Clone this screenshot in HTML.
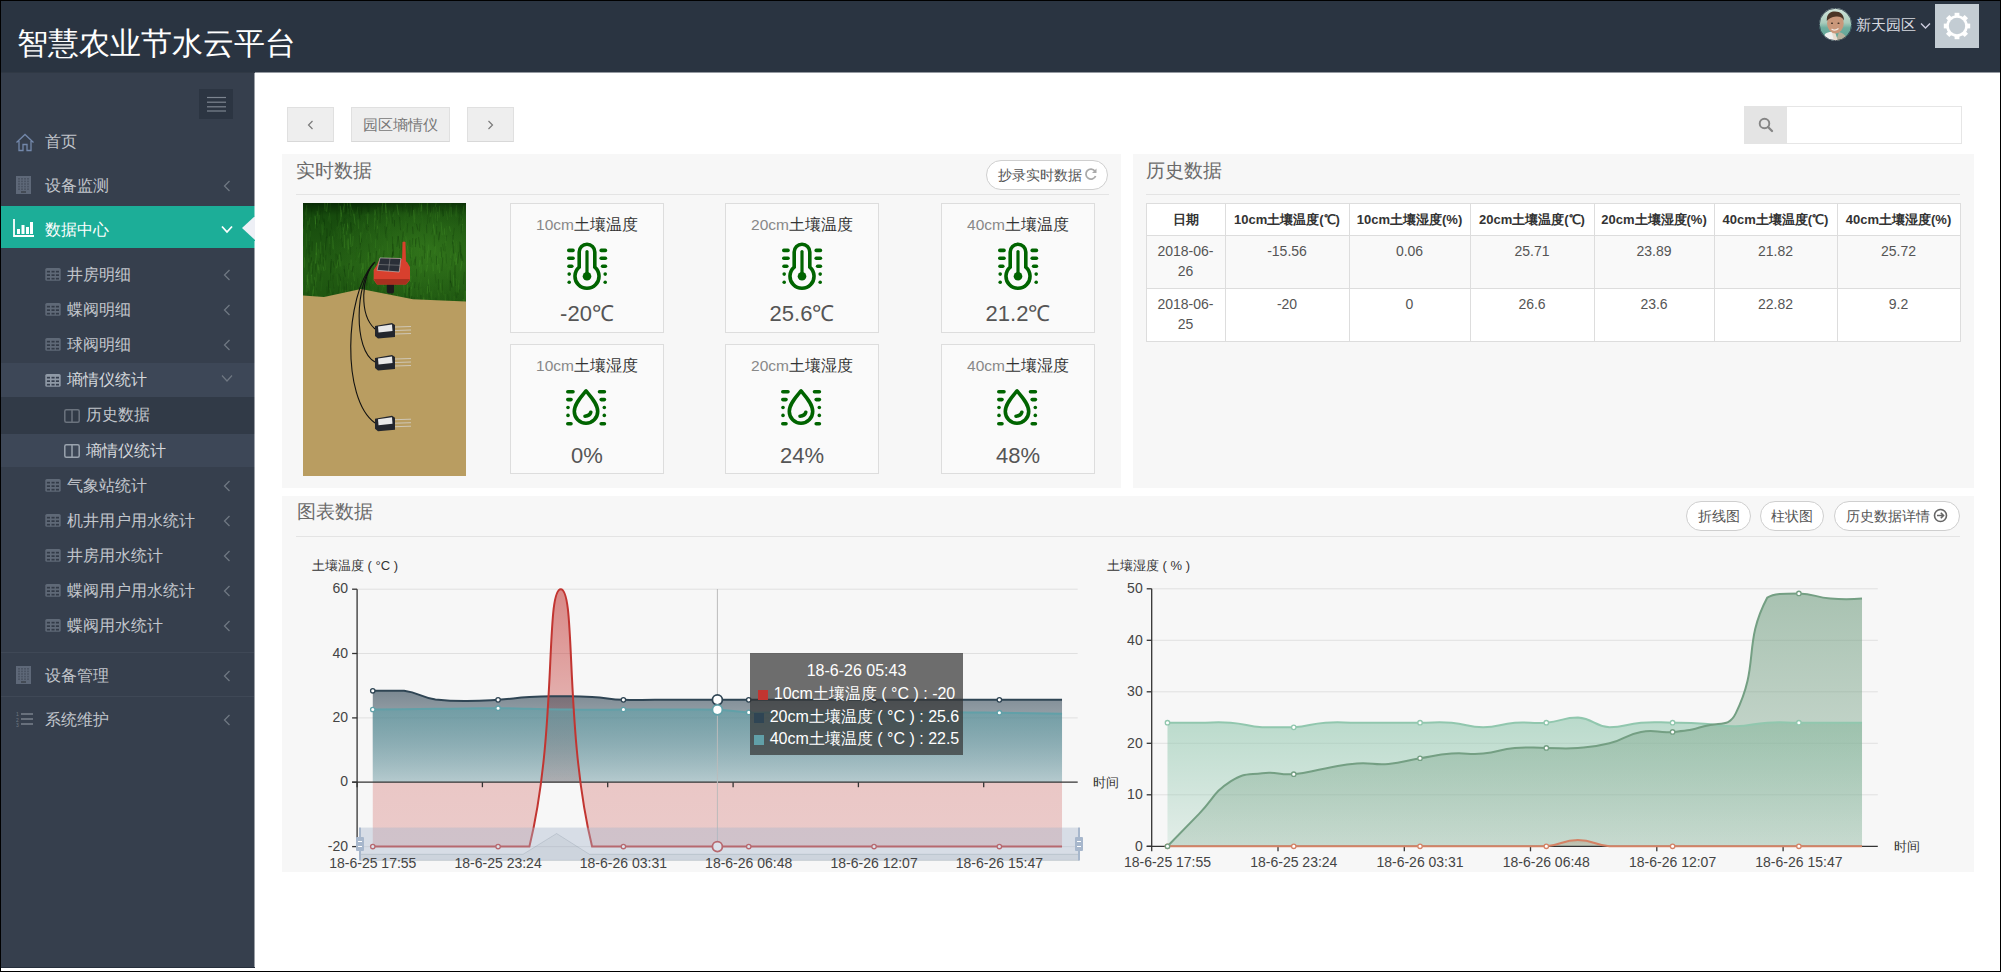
<!DOCTYPE html>
<html><head><meta charset="utf-8"><style>
*{box-sizing:border-box;margin:0;padding:0}
html,body{width:2001px;height:972px;overflow:hidden;background:#fff;font-family:"Liberation Sans",sans-serif}
.abs{position:absolute}
.bk{position:absolute;background:#000}
#hdr{position:absolute;left:0;top:0;width:2001px;height:72px;background:#2a3441}
#title{position:absolute;left:17px;top:24px;font-size:31px;color:#fff;white-space:nowrap;line-height:40px}
#side{position:absolute;left:0;top:72px;width:255px;height:895px;background:#363f4d}
.panel{position:absolute;background:#f7f7f7}
.ptitle{position:absolute;font-size:19px;line-height:24px;color:#6b6b6b;white-space:nowrap}
.divl{position:absolute;height:1px;background:#e4e4e4}
.btn{position:absolute;background:#eee;border:1px solid #e0e0e0;border-bottom-color:#d8d8d8;color:#777;font-size:15px;text-align:center}
.card{position:absolute;width:154px;height:130px;background:#fafafa;border:1px solid #ddd;text-align:center}
.card .lab{position:absolute;left:0;right:0;top:9px;font-size:15px;line-height:20px;color:#333;white-space:nowrap}
.card .lab span{color:#777}
.card .val{position:absolute;left:0;right:0;top:95px;font-size:22px;line-height:26px;color:#444;white-space:nowrap}
.card svg{position:absolute}
.pill{position:absolute;border:1px solid #cfcfcf;border-radius:15px;background:#fff;color:#555;font-size:14px;text-align:center;white-space:nowrap}
.cell{position:absolute;font-size:14px;color:#555;text-align:center;white-space:nowrap;line-height:20px}
</style></head><body>
<div id="hdr"><div id="title">智慧农业节水云平台</div></div><div id="side"><div class="abs" style="left:199px;top:17px;width:34px;height:30px;background:#2c3542"></div><svg class="abs" style="left:207px;top:24px" width="19" height="16"><g stroke="#7d8590" stroke-width="1.2"><line x1="0" y1="1.5" x2="19" y2="1.5"/><line x1="0" y1="6.2" x2="19" y2="6.2"/><line x1="0" y1="10.8" x2="19" y2="10.8"/><line x1="0" y1="15" x2="19" y2="15"/></g></svg><svg class="abs" style="left:15px;top:61px" width="20" height="19"><path d="M1.5 9.5 L10 1.5 L18.5 9.5 M4 8 V17.5 H8 V11.5 H12 V17.5 H16 V8" fill="none" stroke="#7388ab" stroke-width="1.3"/></svg><div class="abs" style="left:45px;top:60px;font-size:15.5px;line-height:20px;color:#c2c6cc;white-space:nowrap">首页</div><svg class="abs" style="left:16px;top:104px" width="15" height="18"><rect x="0" y="0" width="15" height="18" fill="#5e6878"/><rect x="2" y="2.0" width="2" height="1.6" fill="#4c5564"/><rect x="5" y="2.0" width="2" height="1.6" fill="#4c5564"/><rect x="8" y="2.0" width="2" height="1.6" fill="#4c5564"/><rect x="11" y="2.0" width="2" height="1.6" fill="#4c5564"/><rect x="2" y="4.6" width="2" height="1.6" fill="#4c5564"/><rect x="5" y="4.6" width="2" height="1.6" fill="#4c5564"/><rect x="8" y="4.6" width="2" height="1.6" fill="#4c5564"/><rect x="11" y="4.6" width="2" height="1.6" fill="#4c5564"/><rect x="2" y="7.2" width="2" height="1.6" fill="#4c5564"/><rect x="5" y="7.2" width="2" height="1.6" fill="#4c5564"/><rect x="8" y="7.2" width="2" height="1.6" fill="#4c5564"/><rect x="11" y="7.2" width="2" height="1.6" fill="#4c5564"/><rect x="2" y="9.8" width="2" height="1.6" fill="#4c5564"/><rect x="5" y="9.8" width="2" height="1.6" fill="#4c5564"/><rect x="8" y="9.8" width="2" height="1.6" fill="#4c5564"/><rect x="11" y="9.8" width="2" height="1.6" fill="#4c5564"/><rect x="2" y="12.4" width="2" height="1.6" fill="#4c5564"/><rect x="5" y="12.4" width="2" height="1.6" fill="#4c5564"/><rect x="8" y="12.4" width="2" height="1.6" fill="#4c5564"/><rect x="11" y="12.4" width="2" height="1.6" fill="#4c5564"/><rect x="5" y="15" width="5" height="2" fill="#444b55"/></svg><div class="abs" style="left:45px;top:104px;font-size:15.5px;line-height:20px;color:#c2c6cc;white-space:nowrap">设备监测</div><svg class="abs" style="left:223px;top:108px" width="8" height="12"><path d="M6.5 1 L1.5 6 L6.5 11" fill="none" stroke="#6f7782" stroke-width="1.3"/></svg><div class="abs" style="left:0;top:134px;width:255px;height:42px;background:#1cae98"></div><svg class="abs" style="left:242px;top:144px" width="13" height="24"><path d="M13 0 L0 12 L13 24 Z" fill="#eef0f6"/></svg><svg class="abs" style="left:13px;top:147px" width="22" height="18"><path d="M1 0 V17 H21" fill="none" stroke="#fff" stroke-width="1.8"/><rect x="4" y="10" width="3" height="5" fill="#fff"/><rect x="8.5" y="6" width="3" height="9" fill="#fff"/><rect x="13" y="8" width="3" height="7" fill="#fff"/><rect x="17" y="3" width="3" height="12" fill="#fff"/></svg><div class="abs" style="left:45px;top:148px;font-size:15.5px;line-height:20px;color:#ffffff;white-space:nowrap">数据中心</div><svg class="abs" style="left:221px;top:153px" width="12" height="9"><path d="M1 1.5 L6.0 7 L11 1.5" fill="none" stroke="#ffffff" stroke-width="1.8"/></svg><svg class="abs" style="left:45px;top:196px" width="16" height="13"><rect x="0.3" y="0" width="15.4" height="12.8" rx="1.6" fill="#5f6977"/><rect x="1.9" y="2.8" width="3.1" height="1.7" fill="#323a47"/><rect x="1.9" y="6.3" width="3.1" height="1.7" fill="#323a47"/><rect x="1.9" y="9.8" width="3.1" height="1.7" fill="#323a47"/><rect x="6.5" y="2.8" width="3.1" height="1.7" fill="#323a47"/><rect x="6.5" y="6.3" width="3.1" height="1.7" fill="#323a47"/><rect x="6.5" y="9.8" width="3.1" height="1.7" fill="#323a47"/><rect x="10.9" y="2.8" width="3.1" height="1.7" fill="#323a47"/><rect x="10.9" y="6.3" width="3.1" height="1.7" fill="#323a47"/><rect x="10.9" y="9.8" width="3.1" height="1.7" fill="#323a47"/></svg><div class="abs" style="left:67px;top:193px;font-size:15.5px;line-height:20px;color:#c2c6cc;white-space:nowrap">井房明细</div><svg class="abs" style="left:223px;top:197px" width="8" height="12"><path d="M6.5 1 L1.5 6 L6.5 11" fill="none" stroke="#6f7782" stroke-width="1.3"/></svg><svg class="abs" style="left:45px;top:231px" width="16" height="13"><rect x="0.3" y="0" width="15.4" height="12.8" rx="1.6" fill="#5f6977"/><rect x="1.9" y="2.8" width="3.1" height="1.7" fill="#323a47"/><rect x="1.9" y="6.3" width="3.1" height="1.7" fill="#323a47"/><rect x="1.9" y="9.8" width="3.1" height="1.7" fill="#323a47"/><rect x="6.5" y="2.8" width="3.1" height="1.7" fill="#323a47"/><rect x="6.5" y="6.3" width="3.1" height="1.7" fill="#323a47"/><rect x="6.5" y="9.8" width="3.1" height="1.7" fill="#323a47"/><rect x="10.9" y="2.8" width="3.1" height="1.7" fill="#323a47"/><rect x="10.9" y="6.3" width="3.1" height="1.7" fill="#323a47"/><rect x="10.9" y="9.8" width="3.1" height="1.7" fill="#323a47"/></svg><div class="abs" style="left:67px;top:228px;font-size:15.5px;line-height:20px;color:#c2c6cc;white-space:nowrap">蝶阀明细</div><svg class="abs" style="left:223px;top:232px" width="8" height="12"><path d="M6.5 1 L1.5 6 L6.5 11" fill="none" stroke="#6f7782" stroke-width="1.3"/></svg><svg class="abs" style="left:45px;top:266px" width="16" height="13"><rect x="0.3" y="0" width="15.4" height="12.8" rx="1.6" fill="#5f6977"/><rect x="1.9" y="2.8" width="3.1" height="1.7" fill="#323a47"/><rect x="1.9" y="6.3" width="3.1" height="1.7" fill="#323a47"/><rect x="1.9" y="9.8" width="3.1" height="1.7" fill="#323a47"/><rect x="6.5" y="2.8" width="3.1" height="1.7" fill="#323a47"/><rect x="6.5" y="6.3" width="3.1" height="1.7" fill="#323a47"/><rect x="6.5" y="9.8" width="3.1" height="1.7" fill="#323a47"/><rect x="10.9" y="2.8" width="3.1" height="1.7" fill="#323a47"/><rect x="10.9" y="6.3" width="3.1" height="1.7" fill="#323a47"/><rect x="10.9" y="9.8" width="3.1" height="1.7" fill="#323a47"/></svg><div class="abs" style="left:67px;top:263px;font-size:15.5px;line-height:20px;color:#c2c6cc;white-space:nowrap">球阀明细</div><svg class="abs" style="left:223px;top:267px" width="8" height="12"><path d="M6.5 1 L1.5 6 L6.5 11" fill="none" stroke="#6f7782" stroke-width="1.3"/></svg><div class="abs" style="left:0;top:291px;width:255px;height:34px;background:#3d4757"></div><svg class="abs" style="left:45px;top:302px" width="16" height="13"><rect x="0.3" y="0" width="15.4" height="12.8" rx="1.6" fill="#8f99a6"/><rect x="1.9" y="2.8" width="3.1" height="1.7" fill="#343d4c"/><rect x="1.9" y="6.3" width="3.1" height="1.7" fill="#343d4c"/><rect x="1.9" y="9.8" width="3.1" height="1.7" fill="#343d4c"/><rect x="6.5" y="2.8" width="3.1" height="1.7" fill="#343d4c"/><rect x="6.5" y="6.3" width="3.1" height="1.7" fill="#343d4c"/><rect x="6.5" y="9.8" width="3.1" height="1.7" fill="#343d4c"/><rect x="10.9" y="2.8" width="3.1" height="1.7" fill="#343d4c"/><rect x="10.9" y="6.3" width="3.1" height="1.7" fill="#343d4c"/><rect x="10.9" y="9.8" width="3.1" height="1.7" fill="#343d4c"/></svg><div class="abs" style="left:67px;top:298px;font-size:15.5px;line-height:20px;color:#d5d8dc;white-space:nowrap">墒情仪统计</div><svg class="abs" style="left:221px;top:302px" width="12" height="9"><path d="M1 1.5 L6.0 7 L11 1.5" fill="none" stroke="#6f7782" stroke-width="1.2"/></svg><div class="abs" style="left:0;top:325px;width:255px;height:37px;background:#313a47"></div><svg class="abs" style="left:64px;top:337px" width="16" height="14"><rect x="0.8" y="0.8" width="14.4" height="12.4" rx="1.5" fill="none" stroke="#6b737e" stroke-width="1.5"/><line x1="8" y1="1" x2="8" y2="13" stroke="#6b737e" stroke-width="1.5"/></svg><div class="abs" style="left:86px;top:333px;font-size:15.5px;line-height:20px;color:#c2c6cc;white-space:nowrap">历史数据</div><div class="abs" style="left:0;top:362px;width:255px;height:33px;background:#3d4757"></div><svg class="abs" style="left:64px;top:372px" width="16" height="14"><rect x="0.8" y="0.8" width="14.4" height="12.4" rx="1.5" fill="none" stroke="#9aa3ae" stroke-width="1.5"/><line x1="8" y1="1" x2="8" y2="13" stroke="#9aa3ae" stroke-width="1.5"/></svg><div class="abs" style="left:86px;top:369px;font-size:15.5px;line-height:20px;color:#d5d8dc;white-space:nowrap">墒情仪统计</div><svg class="abs" style="left:45px;top:407px" width="16" height="13"><rect x="0.3" y="0" width="15.4" height="12.8" rx="1.6" fill="#5f6977"/><rect x="1.9" y="2.8" width="3.1" height="1.7" fill="#323a47"/><rect x="1.9" y="6.3" width="3.1" height="1.7" fill="#323a47"/><rect x="1.9" y="9.8" width="3.1" height="1.7" fill="#323a47"/><rect x="6.5" y="2.8" width="3.1" height="1.7" fill="#323a47"/><rect x="6.5" y="6.3" width="3.1" height="1.7" fill="#323a47"/><rect x="6.5" y="9.8" width="3.1" height="1.7" fill="#323a47"/><rect x="10.9" y="2.8" width="3.1" height="1.7" fill="#323a47"/><rect x="10.9" y="6.3" width="3.1" height="1.7" fill="#323a47"/><rect x="10.9" y="9.8" width="3.1" height="1.7" fill="#323a47"/></svg><div class="abs" style="left:67px;top:404px;font-size:15.5px;line-height:20px;color:#c2c6cc;white-space:nowrap">气象站统计</div><svg class="abs" style="left:223px;top:408px" width="8" height="12"><path d="M6.5 1 L1.5 6 L6.5 11" fill="none" stroke="#6f7782" stroke-width="1.3"/></svg><svg class="abs" style="left:45px;top:442px" width="16" height="13"><rect x="0.3" y="0" width="15.4" height="12.8" rx="1.6" fill="#5f6977"/><rect x="1.9" y="2.8" width="3.1" height="1.7" fill="#323a47"/><rect x="1.9" y="6.3" width="3.1" height="1.7" fill="#323a47"/><rect x="1.9" y="9.8" width="3.1" height="1.7" fill="#323a47"/><rect x="6.5" y="2.8" width="3.1" height="1.7" fill="#323a47"/><rect x="6.5" y="6.3" width="3.1" height="1.7" fill="#323a47"/><rect x="6.5" y="9.8" width="3.1" height="1.7" fill="#323a47"/><rect x="10.9" y="2.8" width="3.1" height="1.7" fill="#323a47"/><rect x="10.9" y="6.3" width="3.1" height="1.7" fill="#323a47"/><rect x="10.9" y="9.8" width="3.1" height="1.7" fill="#323a47"/></svg><div class="abs" style="left:67px;top:439px;font-size:15.5px;line-height:20px;color:#c2c6cc;white-space:nowrap">机井用户用水统计</div><svg class="abs" style="left:223px;top:443px" width="8" height="12"><path d="M6.5 1 L1.5 6 L6.5 11" fill="none" stroke="#6f7782" stroke-width="1.3"/></svg><svg class="abs" style="left:45px;top:477px" width="16" height="13"><rect x="0.3" y="0" width="15.4" height="12.8" rx="1.6" fill="#5f6977"/><rect x="1.9" y="2.8" width="3.1" height="1.7" fill="#323a47"/><rect x="1.9" y="6.3" width="3.1" height="1.7" fill="#323a47"/><rect x="1.9" y="9.8" width="3.1" height="1.7" fill="#323a47"/><rect x="6.5" y="2.8" width="3.1" height="1.7" fill="#323a47"/><rect x="6.5" y="6.3" width="3.1" height="1.7" fill="#323a47"/><rect x="6.5" y="9.8" width="3.1" height="1.7" fill="#323a47"/><rect x="10.9" y="2.8" width="3.1" height="1.7" fill="#323a47"/><rect x="10.9" y="6.3" width="3.1" height="1.7" fill="#323a47"/><rect x="10.9" y="9.8" width="3.1" height="1.7" fill="#323a47"/></svg><div class="abs" style="left:67px;top:474px;font-size:15.5px;line-height:20px;color:#c2c6cc;white-space:nowrap">井房用水统计</div><svg class="abs" style="left:223px;top:478px" width="8" height="12"><path d="M6.5 1 L1.5 6 L6.5 11" fill="none" stroke="#6f7782" stroke-width="1.3"/></svg><svg class="abs" style="left:45px;top:512px" width="16" height="13"><rect x="0.3" y="0" width="15.4" height="12.8" rx="1.6" fill="#5f6977"/><rect x="1.9" y="2.8" width="3.1" height="1.7" fill="#323a47"/><rect x="1.9" y="6.3" width="3.1" height="1.7" fill="#323a47"/><rect x="1.9" y="9.8" width="3.1" height="1.7" fill="#323a47"/><rect x="6.5" y="2.8" width="3.1" height="1.7" fill="#323a47"/><rect x="6.5" y="6.3" width="3.1" height="1.7" fill="#323a47"/><rect x="6.5" y="9.8" width="3.1" height="1.7" fill="#323a47"/><rect x="10.9" y="2.8" width="3.1" height="1.7" fill="#323a47"/><rect x="10.9" y="6.3" width="3.1" height="1.7" fill="#323a47"/><rect x="10.9" y="9.8" width="3.1" height="1.7" fill="#323a47"/></svg><div class="abs" style="left:67px;top:509px;font-size:15.5px;line-height:20px;color:#c2c6cc;white-space:nowrap">蝶阀用户用水统计</div><svg class="abs" style="left:223px;top:513px" width="8" height="12"><path d="M6.5 1 L1.5 6 L6.5 11" fill="none" stroke="#6f7782" stroke-width="1.3"/></svg><svg class="abs" style="left:45px;top:547px" width="16" height="13"><rect x="0.3" y="0" width="15.4" height="12.8" rx="1.6" fill="#5f6977"/><rect x="1.9" y="2.8" width="3.1" height="1.7" fill="#323a47"/><rect x="1.9" y="6.3" width="3.1" height="1.7" fill="#323a47"/><rect x="1.9" y="9.8" width="3.1" height="1.7" fill="#323a47"/><rect x="6.5" y="2.8" width="3.1" height="1.7" fill="#323a47"/><rect x="6.5" y="6.3" width="3.1" height="1.7" fill="#323a47"/><rect x="6.5" y="9.8" width="3.1" height="1.7" fill="#323a47"/><rect x="10.9" y="2.8" width="3.1" height="1.7" fill="#323a47"/><rect x="10.9" y="6.3" width="3.1" height="1.7" fill="#323a47"/><rect x="10.9" y="9.8" width="3.1" height="1.7" fill="#323a47"/></svg><div class="abs" style="left:67px;top:544px;font-size:15.5px;line-height:20px;color:#c2c6cc;white-space:nowrap">蝶阀用水统计</div><svg class="abs" style="left:223px;top:548px" width="8" height="12"><path d="M6.5 1 L1.5 6 L6.5 11" fill="none" stroke="#6f7782" stroke-width="1.3"/></svg><div class="abs" style="left:0;top:580px;width:255px;height:1px;background:#3f4856"></div><svg class="abs" style="left:16px;top:594px" width="15" height="18"><rect x="0" y="0" width="15" height="18" fill="#5e6878"/><rect x="2" y="2.0" width="2" height="1.6" fill="#4c5564"/><rect x="5" y="2.0" width="2" height="1.6" fill="#4c5564"/><rect x="8" y="2.0" width="2" height="1.6" fill="#4c5564"/><rect x="11" y="2.0" width="2" height="1.6" fill="#4c5564"/><rect x="2" y="4.6" width="2" height="1.6" fill="#4c5564"/><rect x="5" y="4.6" width="2" height="1.6" fill="#4c5564"/><rect x="8" y="4.6" width="2" height="1.6" fill="#4c5564"/><rect x="11" y="4.6" width="2" height="1.6" fill="#4c5564"/><rect x="2" y="7.2" width="2" height="1.6" fill="#4c5564"/><rect x="5" y="7.2" width="2" height="1.6" fill="#4c5564"/><rect x="8" y="7.2" width="2" height="1.6" fill="#4c5564"/><rect x="11" y="7.2" width="2" height="1.6" fill="#4c5564"/><rect x="2" y="9.8" width="2" height="1.6" fill="#4c5564"/><rect x="5" y="9.8" width="2" height="1.6" fill="#4c5564"/><rect x="8" y="9.8" width="2" height="1.6" fill="#4c5564"/><rect x="11" y="9.8" width="2" height="1.6" fill="#4c5564"/><rect x="2" y="12.4" width="2" height="1.6" fill="#4c5564"/><rect x="5" y="12.4" width="2" height="1.6" fill="#4c5564"/><rect x="8" y="12.4" width="2" height="1.6" fill="#4c5564"/><rect x="11" y="12.4" width="2" height="1.6" fill="#4c5564"/><rect x="5" y="15" width="5" height="2" fill="#444b55"/></svg><div class="abs" style="left:45px;top:594px;font-size:15.5px;line-height:20px;color:#c2c6cc;white-space:nowrap">设备管理</div><svg class="abs" style="left:223px;top:598px" width="8" height="12"><path d="M6.5 1 L1.5 6 L6.5 11" fill="none" stroke="#6f7782" stroke-width="1.3"/></svg><div class="abs" style="left:0;top:624px;width:255px;height:1px;background:#3f4856"></div><svg class="abs" style="left:16px;top:639px" width="17" height="16"><g fill="#6f7782" font-size="5" font-family="Liberation Sans"><text x="0" y="5">1</text><text x="0" y="10.5">2</text><text x="0" y="16">3</text></g><g stroke="#6f7782" stroke-width="1.8"><line x1="5" y1="3" x2="17" y2="3"/><line x1="5" y1="8" x2="17" y2="8"/><line x1="5" y1="13" x2="17" y2="13"/></g></svg><div class="abs" style="left:45px;top:638px;font-size:15.5px;line-height:20px;color:#c2c6cc;white-space:nowrap">系统维护</div><svg class="abs" style="left:223px;top:642px" width="8" height="12"><path d="M6.5 1 L1.5 6 L6.5 11" fill="none" stroke="#6f7782" stroke-width="1.3"/></svg></div><svg class="abs" style="left:1819px;top:8px" width="33" height="33" viewBox="0 0 33 33"><defs><clipPath id="av"><circle cx="16.5" cy="16.5" r="16.4"/></clipPath>
<linearGradient id="avbg" x1="0" y1="0" x2="0" y2="1"><stop offset="0" stop-color="#d4e6dc"/><stop offset="0.45" stop-color="#a9cbbb"/><stop offset="0.6" stop-color="#6fae9f"/><stop offset="1" stop-color="#5fa293"/></linearGradient></defs>
<g clip-path="url(#av)"><rect width="33" height="33" fill="url(#avbg)"/>
<path d="M4 33 L6 26 C9 24 12 23.5 15 24.5 L19 33 Z" fill="#f0f0ee"/>
<path d="M17 33 L20 24 C24 25 27 27 29 33 Z" fill="#b5b09a"/>
<path d="M13 25 L16 24 L19 33 L15 33 Z" fill="#e8ddd0"/>
<ellipse cx="16.4" cy="15.5" rx="8.3" ry="10" fill="#c9977a"/>
<path d="M7.8 13 C7.5 6 11 3.5 16 3.6 C21.5 3.7 25 6.5 25 12.5 C23.5 9.5 21 8.3 17 8.6 C12.5 9 10 10.5 7.8 13 Z" fill="#4b3526"/>
<path d="M12.5 21 Q16 23.5 19.5 20.5" stroke="#f2e8e0" stroke-width="1.1" fill="none"/>
<ellipse cx="13" cy="15.2" rx="1.1" ry="0.7" fill="#3a2a20"/><ellipse cx="19.5" cy="15.2" rx="1.1" ry="0.7" fill="#3a2a20"/>
</g><circle cx="16.5" cy="16.5" r="16.2" fill="none" stroke="#233040" stroke-width="0.8"/></svg><div class="abs" style="left:1856px;top:15px;font-size:15px;line-height:20px;color:#d8dbe0;white-space:nowrap">新天园区</div><svg class="abs" style="left:1920px;top:22px" width="11" height="8"><path d="M1 1.5 L5.5 6 L10 1.5" fill="none" stroke="#ccd" stroke-width="1.4"/></svg><div class="abs" style="left:1935px;top:4px;width:44px;height:44px;background:#c3ccd3"></div><svg class="abs" style="left:1942px;top:11px" width="30" height="30" viewBox="-15 -15 30 30"><rect x="-2.4" y="-13.2" width="4.8" height="4" transform="rotate(0)" fill="#fff"/><rect x="-2.4" y="-13.2" width="4.8" height="4" transform="rotate(45)" fill="#fff"/><rect x="-2.4" y="-13.2" width="4.8" height="4" transform="rotate(90)" fill="#fff"/><rect x="-2.4" y="-13.2" width="4.8" height="4" transform="rotate(135)" fill="#fff"/><rect x="-2.4" y="-13.2" width="4.8" height="4" transform="rotate(180)" fill="#fff"/><rect x="-2.4" y="-13.2" width="4.8" height="4" transform="rotate(225)" fill="#fff"/><rect x="-2.4" y="-13.2" width="4.8" height="4" transform="rotate(270)" fill="#fff"/><rect x="-2.4" y="-13.2" width="4.8" height="4" transform="rotate(315)" fill="#fff"/><circle r="10.8" fill="#fff"/><circle r="8.2" fill="#c3ccd3"/></svg><div class="btn" style="left:287px;top:107px;width:47px;height:35px"></div><svg class="abs" style="left:307px;top:120px" width="7" height="10"><path d="M5.5 1 L1.5 5 L5.5 9" fill="none" stroke="#7a7a7a" stroke-width="1.2"/></svg><div class="btn" style="left:351px;top:107px;width:99px;height:35px;line-height:33px;color:#777">园区墒情仪</div><div class="btn" style="left:467px;top:107px;width:47px;height:35px"></div><svg class="abs" style="left:487px;top:120px" width="7" height="10"><path d="M1.5 1 L5.5 5 L1.5 9" fill="none" stroke="#7a7a7a" stroke-width="1.2"/></svg><div class="abs" style="left:1744px;top:106px;width:218px;height:38px;border:1px solid #e6e6e6;background:#fff"></div><div class="abs" style="left:1744px;top:106px;width:43px;height:38px;background:#e4e4e4"></div><svg class="abs" style="left:1758px;top:117px" width="16" height="16"><circle cx="6.5" cy="6.5" r="4.8" fill="none" stroke="#858585" stroke-width="1.9"/><line x1="10" y1="10" x2="14" y2="14" stroke="#858585" stroke-width="2.3" stroke-linecap="round"/></svg><div class="panel" style="left:282px;top:154px;width:839px;height:334px"></div><div class="ptitle" style="left:296px;top:159px">实时数据</div><div class="divl" style="left:296px;top:194px;width:813px"></div><div class="pill" style="left:986px;top:160px;width:122px;height:30px;line-height:28px;padding-right:14px">抄录实时数据</div><svg class="abs" style="left:1084px;top:167px" width="14" height="14"><path d="M11 4.2 A5 5 0 1 0 11.6 9" fill="none" stroke="#aaa" stroke-width="1.8"/><path d="M12.5 1.5 L12.5 6 L8 6 Z" fill="#aaa"/></svg><svg class="abs" style="left:303px;top:203px" width="163" height="273" viewBox="0 0 163 273"><defs><linearGradient id="gr" x1="0" y1="0" x2="0" y2="1"><stop offset="0" stop-color="#082a05"/><stop offset="0.12" stop-color="#164a0d"/><stop offset="0.6" stop-color="#225c13"/><stop offset="1" stop-color="#1d5410"/></linearGradient><radialGradient id="gl" cx="0.75" cy="0.45" r="0.6"><stop offset="0" stop-color="#3f8a22" stop-opacity="0.55"/><stop offset="1" stop-color="#3f8a22" stop-opacity="0"/></radialGradient></defs><rect x="0" y="0" width="163" height="102" fill="url(#gr)"/><rect x="0" y="0" width="163" height="102" fill="url(#gl)"/><g fill="none" stroke-width="0.7"><path d="M52.1 21.7 L50.9 10.8" stroke="#4a9a2a" stroke-opacity="0.50"/><path d="M95.3 97.5 L94.0 90.5" stroke="#4a9a2a" stroke-opacity="0.38"/><path d="M13.1 52.0 L13.5 39.6" stroke="#4a9a2a" stroke-opacity="0.53"/><path d="M95.4 11.8 L94.0 1.5" stroke="#4a9a2a" stroke-opacity="0.54"/><path d="M141.4 31.7 L141.5 25.4" stroke="#4a9a2a" stroke-opacity="0.42"/><path d="M111.9 16.0 L112.0 5.8" stroke="#377a1e" stroke-opacity="0.36"/><path d="M8.5 8.1 L7.9 1.3" stroke="#0a2e06" stroke-opacity="0.38"/><path d="M95.8 50.3 L95.0 42.6" stroke="#377a1e" stroke-opacity="0.46"/><path d="M93.9 63.0 L95.4 50.1" stroke="#2b6a18" stroke-opacity="0.34"/><path d="M17.7 50.7 L17.5 38.9" stroke="#377a1e" stroke-opacity="0.53"/><path d="M158.7 13.2 L158.2 3.2" stroke="#0e3a08" stroke-opacity="0.35"/><path d="M80.9 84.3 L80.9 78.7" stroke="#4a9a2a" stroke-opacity="0.53"/><path d="M108.9 12.7 L109.9 1.4" stroke="#0a2e06" stroke-opacity="0.55"/><path d="M45.5 46.5 L45.1 35.5" stroke="#4a9a2a" stroke-opacity="0.53"/><path d="M100.0 53.8 L99.3 46.8" stroke="#0e3a08" stroke-opacity="0.29"/><path d="M63.3 92.2 L62.6 86.5" stroke="#2b6a18" stroke-opacity="0.37"/><path d="M20.9 50.2 L21.4 40.2" stroke="#2b6a18" stroke-opacity="0.55"/><path d="M61.5 25.0 L60.7 19.2" stroke="#377a1e" stroke-opacity="0.32"/><path d="M79.0 64.2 L79.1 56.9" stroke="#4a9a2a" stroke-opacity="0.29"/><path d="M99.8 34.6 L100.3 28.5" stroke="#0a2e06" stroke-opacity="0.54"/><path d="M121.5 55.8 L121.2 42.9" stroke="#0a2e06" stroke-opacity="0.37"/><path d="M15.3 67.2 L15.1 61.6" stroke="#4a9a2a" stroke-opacity="0.55"/><path d="M16.4 64.0 L15.2 58.1" stroke="#0a2e06" stroke-opacity="0.30"/><path d="M58.7 10.5 L59.1 -2.3" stroke="#0a2e06" stroke-opacity="0.36"/><path d="M157.6 67.5 L159.0 58.2" stroke="#4a9a2a" stroke-opacity="0.50"/><path d="M75.8 51.6 L76.5 45.8" stroke="#4a9a2a" stroke-opacity="0.47"/><path d="M77.9 77.3 L78.0 67.7" stroke="#377a1e" stroke-opacity="0.54"/><path d="M22.5 57.3 L22.9 52.0" stroke="#0a2e06" stroke-opacity="0.34"/><path d="M13.2 93.4 L12.4 83.8" stroke="#377a1e" stroke-opacity="0.36"/><path d="M88.4 58.5 L89.9 47.8" stroke="#0a2e06" stroke-opacity="0.49"/><path d="M140.4 92.0 L140.4 79.6" stroke="#377a1e" stroke-opacity="0.31"/><path d="M120.1 111.0 L120.7 98.9" stroke="#2b6a18" stroke-opacity="0.33"/><path d="M157.7 55.4 L157.3 42.0" stroke="#0e3a08" stroke-opacity="0.54"/><path d="M34.8 25.6 L36.3 18.8" stroke="#377a1e" stroke-opacity="0.39"/><path d="M99.9 8.4 L98.7 -4.8" stroke="#0e3a08" stroke-opacity="0.49"/><path d="M108.3 102.6 L107.4 90.5" stroke="#377a1e" stroke-opacity="0.39"/><path d="M129.8 42.1 L130.5 29.9" stroke="#2b6a18" stroke-opacity="0.39"/><path d="M12.2 25.6 L13.4 11.7" stroke="#4a9a2a" stroke-opacity="0.30"/><path d="M132.7 22.8 L132.2 10.3" stroke="#2b6a18" stroke-opacity="0.45"/><path d="M89.6 13.9 L90.9 8.8" stroke="#4a9a2a" stroke-opacity="0.41"/><path d="M70.4 99.0 L69.6 86.5" stroke="#377a1e" stroke-opacity="0.26"/><path d="M81.7 83.1 L80.6 75.2" stroke="#0a2e06" stroke-opacity="0.38"/><path d="M150.0 41.3 L150.0 32.1" stroke="#0a2e06" stroke-opacity="0.49"/><path d="M136.1 93.4 L134.7 87.2" stroke="#377a1e" stroke-opacity="0.41"/><path d="M71.5 19.3 L71.4 14.2" stroke="#377a1e" stroke-opacity="0.30"/><path d="M119.1 61.4 L119.1 53.4" stroke="#0a2e06" stroke-opacity="0.41"/><path d="M127.7 93.3 L128.5 87.7" stroke="#377a1e" stroke-opacity="0.33"/><path d="M82.8 65.8 L83.1 54.0" stroke="#4a9a2a" stroke-opacity="0.38"/><path d="M82.4 60.0 L83.3 48.8" stroke="#2b6a18" stroke-opacity="0.40"/><path d="M82.8 30.7 L84.0 21.0" stroke="#0e3a08" stroke-opacity="0.53"/><path d="M31.8 50.7 L30.5 42.0" stroke="#2b6a18" stroke-opacity="0.38"/><path d="M38.2 13.7 L37.2 2.7" stroke="#4a9a2a" stroke-opacity="0.52"/><path d="M117.6 70.6 L116.8 64.3" stroke="#377a1e" stroke-opacity="0.54"/><path d="M157.1 46.2 L156.9 36.8" stroke="#377a1e" stroke-opacity="0.30"/><path d="M84.1 37.4 L83.7 30.6" stroke="#0e3a08" stroke-opacity="0.28"/><path d="M54.4 54.5 L54.8 43.2" stroke="#2b6a18" stroke-opacity="0.35"/><path d="M83.5 15.6 L82.4 1.8" stroke="#377a1e" stroke-opacity="0.54"/><path d="M42.3 11.2 L43.3 -0.8" stroke="#0e3a08" stroke-opacity="0.48"/><path d="M139.9 79.5 L141.1 66.0" stroke="#2b6a18" stroke-opacity="0.29"/><path d="M93.3 74.3 L92.3 68.5" stroke="#4a9a2a" stroke-opacity="0.49"/><path d="M147.5 28.4 L146.3 23.2" stroke="#4a9a2a" stroke-opacity="0.49"/><path d="M141.0 14.8 L142.5 2.0" stroke="#2b6a18" stroke-opacity="0.25"/><path d="M67.8 101.7 L67.0 91.1" stroke="#4a9a2a" stroke-opacity="0.41"/><path d="M16.3 17.4 L16.7 12.0" stroke="#377a1e" stroke-opacity="0.53"/><path d="M86.7 25.6 L87.6 16.6" stroke="#377a1e" stroke-opacity="0.33"/><path d="M164.1 4.0 L163.1 -1.1" stroke="#0a2e06" stroke-opacity="0.42"/><path d="M77.3 99.1 L77.4 93.1" stroke="#2b6a18" stroke-opacity="0.45"/><path d="M146.4 104.7 L145.9 96.9" stroke="#377a1e" stroke-opacity="0.54"/><path d="M137.0 79.9 L138.4 69.2" stroke="#2b6a18" stroke-opacity="0.55"/><path d="M137.8 7.1 L136.4 -3.5" stroke="#0e3a08" stroke-opacity="0.38"/><path d="M109.1 44.5 L109.7 35.0" stroke="#0e3a08" stroke-opacity="0.43"/><path d="M5.6 21.9 L6.9 14.5" stroke="#4a9a2a" stroke-opacity="0.33"/><path d="M160.4 59.6 L159.5 52.4" stroke="#0e3a08" stroke-opacity="0.32"/><path d="M54.0 11.3 L54.8 3.8" stroke="#377a1e" stroke-opacity="0.32"/><path d="M13.2 87.1 L11.7 80.8" stroke="#0a2e06" stroke-opacity="0.26"/><path d="M48.8 29.7 L47.8 19.4" stroke="#0a2e06" stroke-opacity="0.51"/><path d="M147.1 87.7 L147.1 77.3" stroke="#0e3a08" stroke-opacity="0.47"/><path d="M45.5 66.3 L46.2 60.0" stroke="#0a2e06" stroke-opacity="0.44"/><path d="M133.6 19.3 L134.6 9.6" stroke="#0a2e06" stroke-opacity="0.42"/><path d="M0.7 79.3 L-0.7 67.1" stroke="#377a1e" stroke-opacity="0.28"/><path d="M104.4 104.1 L104.8 95.7" stroke="#2b6a18" stroke-opacity="0.42"/><path d="M102.6 75.9 L101.3 66.5" stroke="#4a9a2a" stroke-opacity="0.39"/><path d="M153.7 95.1 L154.4 89.3" stroke="#0a2e06" stroke-opacity="0.27"/><path d="M40.1 10.2 L40.6 2.8" stroke="#377a1e" stroke-opacity="0.32"/><path d="M74.9 89.5 L75.2 83.8" stroke="#0e3a08" stroke-opacity="0.48"/><path d="M105.3 9.5 L105.9 3.1" stroke="#0e3a08" stroke-opacity="0.45"/><path d="M101.7 18.4 L102.2 9.0" stroke="#2b6a18" stroke-opacity="0.33"/><path d="M113.6 73.6 L113.5 65.9" stroke="#0a2e06" stroke-opacity="0.34"/><path d="M126.1 109.2 L127.4 99.3" stroke="#0e3a08" stroke-opacity="0.54"/><path d="M0.9 55.6 L0.6 43.2" stroke="#2b6a18" stroke-opacity="0.55"/><path d="M151.1 98.4 L151.1 92.7" stroke="#4a9a2a" stroke-opacity="0.29"/><path d="M157.1 21.3 L155.9 8.9" stroke="#0a2e06" stroke-opacity="0.33"/><path d="M59.0 60.2 L57.5 47.3" stroke="#2b6a18" stroke-opacity="0.26"/><path d="M80.1 50.0 L79.7 42.3" stroke="#377a1e" stroke-opacity="0.37"/><path d="M18.2 37.7 L17.1 29.8" stroke="#0e3a08" stroke-opacity="0.50"/><path d="M152.7 83.0 L151.4 69.9" stroke="#0e3a08" stroke-opacity="0.33"/><path d="M63.2 92.0 L64.2 86.3" stroke="#2b6a18" stroke-opacity="0.48"/><path d="M44.9 11.4 L44.2 0.4" stroke="#377a1e" stroke-opacity="0.32"/><path d="M83.3 23.3 L84.3 14.9" stroke="#2b6a18" stroke-opacity="0.52"/><path d="M103.4 104.4 L102.1 90.9" stroke="#0a2e06" stroke-opacity="0.31"/><path d="M153.9 48.7 L153.2 38.1" stroke="#377a1e" stroke-opacity="0.44"/><path d="M6.2 98.5 L5.5 92.3" stroke="#2b6a18" stroke-opacity="0.37"/><path d="M40.7 83.4 L40.1 72.6" stroke="#2b6a18" stroke-opacity="0.45"/><path d="M91.1 42.9 L91.1 36.4" stroke="#377a1e" stroke-opacity="0.27"/><path d="M133.6 61.9 L133.4 52.8" stroke="#0e3a08" stroke-opacity="0.55"/><path d="M21.3 21.0 L20.8 15.2" stroke="#0e3a08" stroke-opacity="0.42"/><path d="M59.5 86.8 L59.2 80.0" stroke="#4a9a2a" stroke-opacity="0.47"/><path d="M67.1 58.4 L67.1 50.0" stroke="#0e3a08" stroke-opacity="0.48"/><path d="M93.9 44.0 L95.0 32.8" stroke="#0a2e06" stroke-opacity="0.44"/><path d="M34.1 30.7 L33.9 23.5" stroke="#2b6a18" stroke-opacity="0.44"/><path d="M50.1 94.2 L50.7 80.5" stroke="#377a1e" stroke-opacity="0.26"/><path d="M147.6 55.0 L148.9 44.7" stroke="#4a9a2a" stroke-opacity="0.27"/><path d="M153.0 59.6 L151.8 50.4" stroke="#2b6a18" stroke-opacity="0.32"/><path d="M23.8 61.0 L24.6 49.8" stroke="#2b6a18" stroke-opacity="0.28"/><path d="M-1.8 18.3 L-2.4 8.2" stroke="#4a9a2a" stroke-opacity="0.44"/><path d="M19.4 32.2 L18.8 21.4" stroke="#4a9a2a" stroke-opacity="0.28"/><path d="M155.6 22.5 L155.7 15.1" stroke="#0a2e06" stroke-opacity="0.25"/><path d="M164.4 32.1 L163.6 24.3" stroke="#377a1e" stroke-opacity="0.39"/><path d="M39.3 107.2 L38.3 95.9" stroke="#0e3a08" stroke-opacity="0.27"/><path d="M145.8 68.7 L147.0 63.0" stroke="#377a1e" stroke-opacity="0.45"/><path d="M35.9 6.6 L35.6 -1.4" stroke="#2b6a18" stroke-opacity="0.36"/><path d="M-0.9 38.3 L0.5 25.7" stroke="#4a9a2a" stroke-opacity="0.31"/><path d="M50.1 88.2 L51.2 81.1" stroke="#377a1e" stroke-opacity="0.33"/><path d="M16.2 71.0 L17.4 60.5" stroke="#377a1e" stroke-opacity="0.40"/><path d="M7.4 70.8 L8.8 57.5" stroke="#4a9a2a" stroke-opacity="0.31"/><path d="M21.7 6.0 L22.3 0.4" stroke="#2b6a18" stroke-opacity="0.38"/><path d="M50.5 12.6 L49.5 6.9" stroke="#377a1e" stroke-opacity="0.35"/><path d="M154.3 78.6 L155.7 73.4" stroke="#2b6a18" stroke-opacity="0.50"/><path d="M71.9 12.1 L73.3 6.4" stroke="#4a9a2a" stroke-opacity="0.36"/><path d="M18.7 103.1 L18.1 96.2" stroke="#0e3a08" stroke-opacity="0.48"/><path d="M132.3 15.6 L133.5 4.2" stroke="#377a1e" stroke-opacity="0.36"/><path d="M30.2 46.3 L29.5 33.2" stroke="#4a9a2a" stroke-opacity="0.44"/><path d="M102.4 45.9 L103.7 37.5" stroke="#2b6a18" stroke-opacity="0.27"/><path d="M40.9 86.6 L40.4 73.5" stroke="#0e3a08" stroke-opacity="0.36"/><path d="M157.3 11.3 L156.7 -0.4" stroke="#0e3a08" stroke-opacity="0.53"/><path d="M118.5 69.8 L117.7 57.5" stroke="#4a9a2a" stroke-opacity="0.26"/><path d="M77.4 109.0 L78.6 95.5" stroke="#2b6a18" stroke-opacity="0.49"/><path d="M134.1 18.4 L134.8 8.9" stroke="#4a9a2a" stroke-opacity="0.49"/><path d="M135.4 86.6 L135.3 76.1" stroke="#0e3a08" stroke-opacity="0.51"/><path d="M128.9 67.2 L128.1 57.6" stroke="#2b6a18" stroke-opacity="0.48"/><path d="M8.8 8.5 L8.6 -1.4" stroke="#0e3a08" stroke-opacity="0.30"/><path d="M15.6 13.2 L15.6 2.6" stroke="#377a1e" stroke-opacity="0.28"/><path d="M116.5 49.0 L117.7 41.9" stroke="#2b6a18" stroke-opacity="0.39"/><path d="M37.2 63.5 L36.6 51.5" stroke="#4a9a2a" stroke-opacity="0.48"/><path d="M44.7 30.4 L43.9 23.1" stroke="#0e3a08" stroke-opacity="0.31"/><path d="M39.0 24.1 L37.7 11.1" stroke="#0a2e06" stroke-opacity="0.31"/><path d="M40.0 30.6 L41.5 20.8" stroke="#4a9a2a" stroke-opacity="0.45"/><path d="M15.1 57.2 L13.7 44.9" stroke="#2b6a18" stroke-opacity="0.52"/><path d="M47.0 14.2 L45.8 7.5" stroke="#0a2e06" stroke-opacity="0.31"/><path d="M83.6 24.1 L83.9 13.7" stroke="#4a9a2a" stroke-opacity="0.28"/><path d="M101.5 26.2 L103.0 17.9" stroke="#377a1e" stroke-opacity="0.26"/><path d="M4.4 85.1 L4.1 71.9" stroke="#4a9a2a" stroke-opacity="0.50"/><path d="M60.1 65.9 L60.2 60.2" stroke="#4a9a2a" stroke-opacity="0.49"/><path d="M8.6 14.2 L8.7 5.6" stroke="#0a2e06" stroke-opacity="0.30"/><path d="M107.1 44.2 L106.8 36.8" stroke="#0e3a08" stroke-opacity="0.45"/><path d="M6.6 86.2 L7.7 73.3" stroke="#2b6a18" stroke-opacity="0.37"/><path d="M164.4 40.0 L163.0 33.2" stroke="#2b6a18" stroke-opacity="0.31"/><path d="M148.6 51.9 L148.2 39.5" stroke="#2b6a18" stroke-opacity="0.42"/><path d="M127.1 14.1 L128.3 8.6" stroke="#377a1e" stroke-opacity="0.44"/><path d="M12.9 68.7 L12.4 60.3" stroke="#0a2e06" stroke-opacity="0.30"/><path d="M25.0 18.6 L25.9 13.0" stroke="#2b6a18" stroke-opacity="0.40"/><path d="M159.5 21.9 L159.4 15.7" stroke="#4a9a2a" stroke-opacity="0.54"/><path d="M6.9 100.7 L8.1 92.2" stroke="#0a2e06" stroke-opacity="0.46"/><path d="M104.9 95.5 L105.9 84.9" stroke="#0a2e06" stroke-opacity="0.50"/><path d="M28.6 26.5 L28.1 17.9" stroke="#0a2e06" stroke-opacity="0.30"/><path d="M23.0 109.3 L23.1 96.9" stroke="#377a1e" stroke-opacity="0.26"/><path d="M124.5 11.5 L124.4 -1.0" stroke="#4a9a2a" stroke-opacity="0.37"/><path d="M139.8 87.5 L139.6 76.7" stroke="#0e3a08" stroke-opacity="0.42"/><path d="M108.0 50.9 L109.5 41.9" stroke="#4a9a2a" stroke-opacity="0.25"/><path d="M75.7 52.5 L76.6 41.9" stroke="#2b6a18" stroke-opacity="0.50"/><path d="M64.9 10.3 L64.7 2.0" stroke="#0e3a08" stroke-opacity="0.28"/><path d="M83.2 10.0 L82.6 -0.7" stroke="#4a9a2a" stroke-opacity="0.53"/><path d="M118.3 15.2 L119.2 3.4" stroke="#2b6a18" stroke-opacity="0.45"/><path d="M2.3 12.5 L3.8 2.0" stroke="#4a9a2a" stroke-opacity="0.31"/><path d="M80.1 108.7 L80.8 95.4" stroke="#377a1e" stroke-opacity="0.46"/><path d="M34.9 93.0 L36.1 82.5" stroke="#0e3a08" stroke-opacity="0.30"/><path d="M43.9 86.9 L43.9 80.6" stroke="#0a2e06" stroke-opacity="0.54"/><path d="M96.8 66.8 L95.9 59.7" stroke="#0e3a08" stroke-opacity="0.26"/><path d="M24.9 104.4 L25.8 93.3" stroke="#2b6a18" stroke-opacity="0.30"/><path d="M17.2 61.5 L17.1 50.7" stroke="#0e3a08" stroke-opacity="0.54"/><path d="M85.1 80.4 L85.5 67.3" stroke="#0e3a08" stroke-opacity="0.55"/><path d="M63.8 86.1 L63.4 78.8" stroke="#0e3a08" stroke-opacity="0.42"/><path d="M125.7 48.0 L125.7 41.4" stroke="#4a9a2a" stroke-opacity="0.34"/><path d="M49.8 109.3 L50.5 96.4" stroke="#0e3a08" stroke-opacity="0.47"/><path d="M35.0 36.2 L36.2 25.6" stroke="#2b6a18" stroke-opacity="0.40"/><path d="M20.0 29.7 L20.2 18.9" stroke="#4a9a2a" stroke-opacity="0.27"/><path d="M48.7 59.7 L49.0 49.9" stroke="#2b6a18" stroke-opacity="0.43"/><path d="M32.1 69.8 L33.0 60.5" stroke="#377a1e" stroke-opacity="0.25"/><path d="M116.1 47.9 L117.0 42.3" stroke="#377a1e" stroke-opacity="0.51"/><path d="M65.1 27.8 L65.4 22.7" stroke="#0a2e06" stroke-opacity="0.52"/><path d="M94.6 67.9 L95.8 58.2" stroke="#2b6a18" stroke-opacity="0.32"/><path d="M5.3 59.5 L6.6 50.8" stroke="#377a1e" stroke-opacity="0.30"/><path d="M15.5 70.2 L14.6 59.3" stroke="#377a1e" stroke-opacity="0.29"/><path d="M99.5 59.0 L99.0 48.2" stroke="#0a2e06" stroke-opacity="0.30"/><path d="M48.1 13.1 L46.7 0.1" stroke="#2b6a18" stroke-opacity="0.46"/><path d="M139.0 82.4 L140.5 73.2" stroke="#2b6a18" stroke-opacity="0.30"/><path d="M41.7 68.7 L41.0 62.6" stroke="#0e3a08" stroke-opacity="0.46"/><path d="M90.5 52.9 L89.9 40.8" stroke="#0a2e06" stroke-opacity="0.54"/><path d="M153.1 94.7 L152.4 88.9" stroke="#0a2e06" stroke-opacity="0.25"/><path d="M37.4 86.6 L37.1 73.1" stroke="#0e3a08" stroke-opacity="0.31"/><path d="M98.4 47.5 L99.4 34.8" stroke="#0a2e06" stroke-opacity="0.39"/><path d="M114.5 94.0 L113.9 85.0" stroke="#377a1e" stroke-opacity="0.42"/><path d="M33.4 66.1 L32.0 60.4" stroke="#377a1e" stroke-opacity="0.29"/><path d="M15.8 100.6 L14.4 92.5" stroke="#377a1e" stroke-opacity="0.46"/><path d="M21.1 68.0 L19.8 62.6" stroke="#4a9a2a" stroke-opacity="0.47"/><path d="M96.6 45.5 L95.3 33.2" stroke="#0a2e06" stroke-opacity="0.52"/><path d="M142.9 104.5 L142.0 91.0" stroke="#4a9a2a" stroke-opacity="0.32"/><path d="M3.7 107.9 L4.0 94.7" stroke="#4a9a2a" stroke-opacity="0.50"/><path d="M46.0 11.4 L45.5 5.5" stroke="#377a1e" stroke-opacity="0.34"/><path d="M41.6 45.2 L41.2 31.8" stroke="#4a9a2a" stroke-opacity="0.46"/><path d="M51.6 105.8 L50.2 96.2" stroke="#0e3a08" stroke-opacity="0.44"/><path d="M67.0 52.8 L65.6 40.8" stroke="#0e3a08" stroke-opacity="0.39"/><path d="M92.5 82.5 L91.5 70.0" stroke="#0a2e06" stroke-opacity="0.50"/><path d="M-1.8 28.1 L-1.8 16.2" stroke="#4a9a2a" stroke-opacity="0.25"/><path d="M80.1 85.3 L81.4 78.7" stroke="#2b6a18" stroke-opacity="0.43"/><path d="M84.0 62.1 L83.2 55.7" stroke="#377a1e" stroke-opacity="0.53"/><path d="M25.7 105.5 L26.3 93.6" stroke="#2b6a18" stroke-opacity="0.49"/><path d="M129.4 69.1 L130.6 60.9" stroke="#2b6a18" stroke-opacity="0.53"/><path d="M122.5 50.1 L121.7 39.3" stroke="#0e3a08" stroke-opacity="0.31"/><path d="M148.5 56.0 L147.4 47.6" stroke="#377a1e" stroke-opacity="0.53"/><path d="M97.2 77.8 L96.7 67.4" stroke="#4a9a2a" stroke-opacity="0.35"/><path d="M23.9 94.5 L23.8 83.5" stroke="#0e3a08" stroke-opacity="0.30"/><path d="M127.2 61.9 L127.8 55.8" stroke="#2b6a18" stroke-opacity="0.44"/><path d="M82.8 34.9 L81.8 23.1" stroke="#0a2e06" stroke-opacity="0.30"/><path d="M39.3 39.0 L40.7 29.3" stroke="#377a1e" stroke-opacity="0.32"/><path d="M41.2 109.2 L40.0 95.3" stroke="#377a1e" stroke-opacity="0.54"/><path d="M62.2 110.5 L61.3 98.3" stroke="#0e3a08" stroke-opacity="0.38"/><path d="M104.5 13.1 L103.1 6.2" stroke="#2b6a18" stroke-opacity="0.39"/><path d="M140.7 47.8 L139.6 40.8" stroke="#0e3a08" stroke-opacity="0.39"/><path d="M98.8 49.2 L99.1 37.5" stroke="#2b6a18" stroke-opacity="0.46"/><path d="M106.1 94.8 L106.6 83.8" stroke="#0a2e06" stroke-opacity="0.51"/><path d="M105.1 50.5 L104.4 42.7" stroke="#4a9a2a" stroke-opacity="0.52"/><path d="M64.8 76.2 L63.4 69.8" stroke="#2b6a18" stroke-opacity="0.39"/><path d="M141.4 60.4 L140.9 49.4" stroke="#377a1e" stroke-opacity="0.52"/><path d="M-0.2 95.5 L-0.1 82.3" stroke="#4a9a2a" stroke-opacity="0.26"/><path d="M24.9 90.6 L25.9 77.1" stroke="#0a2e06" stroke-opacity="0.35"/><path d="M74.3 25.8 L75.3 16.5" stroke="#4a9a2a" stroke-opacity="0.44"/><path d="M85.1 51.6 L84.2 38.1" stroke="#377a1e" stroke-opacity="0.55"/><path d="M83.8 104.5 L82.5 92.9" stroke="#0a2e06" stroke-opacity="0.36"/><path d="M43.8 42.1 L44.2 37.0" stroke="#2b6a18" stroke-opacity="0.52"/><path d="M110.7 61.9 L112.0 55.9" stroke="#0e3a08" stroke-opacity="0.47"/><path d="M86.0 30.2 L85.0 18.0" stroke="#2b6a18" stroke-opacity="0.39"/><path d="M153.2 14.4 L153.4 2.2" stroke="#377a1e" stroke-opacity="0.39"/><path d="M35.7 104.4 L35.1 96.2" stroke="#2b6a18" stroke-opacity="0.39"/><path d="M89.6 20.6 L88.8 8.1" stroke="#0e3a08" stroke-opacity="0.49"/><path d="M115.6 81.0 L116.5 67.2" stroke="#377a1e" stroke-opacity="0.39"/><path d="M131.4 43.5 L131.2 32.6" stroke="#0e3a08" stroke-opacity="0.39"/><path d="M104.4 72.5 L103.1 64.2" stroke="#0e3a08" stroke-opacity="0.51"/><path d="M136.3 102.2 L135.8 90.1" stroke="#377a1e" stroke-opacity="0.41"/><path d="M95.3 70.9 L94.5 64.0" stroke="#4a9a2a" stroke-opacity="0.45"/><path d="M15.0 17.1 L13.9 10.0" stroke="#2b6a18" stroke-opacity="0.35"/><path d="M149.0 84.6 L147.8 78.1" stroke="#0a2e06" stroke-opacity="0.54"/><path d="M148.6 63.3 L149.2 52.6" stroke="#0e3a08" stroke-opacity="0.31"/><path d="M86.6 81.8 L85.9 72.9" stroke="#4a9a2a" stroke-opacity="0.42"/><path d="M37.1 19.1 L38.3 9.6" stroke="#4a9a2a" stroke-opacity="0.40"/><path d="M115.0 27.4 L113.5 20.9" stroke="#0a2e06" stroke-opacity="0.51"/><path d="M138.4 54.2 L138.0 44.1" stroke="#0e3a08" stroke-opacity="0.50"/><path d="M67.9 101.5 L66.5 95.9" stroke="#0e3a08" stroke-opacity="0.44"/><path d="M99.8 80.1 L98.6 66.7" stroke="#0e3a08" stroke-opacity="0.49"/><path d="M78.9 80.8 L79.2 74.5" stroke="#377a1e" stroke-opacity="0.47"/><path d="M54.5 93.8 L54.7 85.5" stroke="#2b6a18" stroke-opacity="0.48"/><path d="M150.4 32.9 L151.3 24.8" stroke="#0e3a08" stroke-opacity="0.42"/><path d="M46.9 90.5 L48.0 81.9" stroke="#0a2e06" stroke-opacity="0.55"/><path d="M55.6 25.8 L55.0 16.4" stroke="#4a9a2a" stroke-opacity="0.35"/><path d="M48.0 67.3 L48.1 56.6" stroke="#4a9a2a" stroke-opacity="0.37"/><path d="M65.8 63.9 L64.9 55.3" stroke="#4a9a2a" stroke-opacity="0.25"/><path d="M151.9 69.8 L152.2 58.9" stroke="#0a2e06" stroke-opacity="0.52"/><path d="M101.0 72.1 L99.7 60.8" stroke="#0a2e06" stroke-opacity="0.51"/><path d="M4.6 72.2 L3.6 61.5" stroke="#377a1e" stroke-opacity="0.28"/><path d="M4.2 89.6 L5.1 76.3" stroke="#4a9a2a" stroke-opacity="0.36"/><path d="M129.4 61.3 L128.0 54.0" stroke="#0e3a08" stroke-opacity="0.31"/><path d="M1.4 64.7 L1.5 54.5" stroke="#4a9a2a" stroke-opacity="0.40"/><path d="M135.7 85.0 L134.3 76.2" stroke="#2b6a18" stroke-opacity="0.38"/><path d="M62.7 70.6 L62.4 57.2" stroke="#377a1e" stroke-opacity="0.39"/><path d="M15.0 69.6 L14.8 62.7" stroke="#377a1e" stroke-opacity="0.44"/><path d="M-0.4 79.2 L-1.6 65.3" stroke="#4a9a2a" stroke-opacity="0.32"/><path d="M76.9 34.0 L75.9 23.9" stroke="#2b6a18" stroke-opacity="0.47"/><path d="M6.4 87.7 L5.1 76.3" stroke="#377a1e" stroke-opacity="0.47"/><path d="M103.0 78.6 L101.6 69.5" stroke="#0e3a08" stroke-opacity="0.52"/><path d="M3.3 14.3 L2.8 1.4" stroke="#0a2e06" stroke-opacity="0.27"/><path d="M119.8 25.2 L119.3 12.4" stroke="#2b6a18" stroke-opacity="0.43"/><path d="M156.4 80.6 L157.3 71.4" stroke="#377a1e" stroke-opacity="0.29"/><path d="M58.7 73.4 L59.5 62.7" stroke="#2b6a18" stroke-opacity="0.39"/><path d="M73.6 35.4 L72.3 23.6" stroke="#0e3a08" stroke-opacity="0.34"/><path d="M160.6 81.3 L161.3 68.8" stroke="#0e3a08" stroke-opacity="0.51"/><path d="M0.6 23.4 L1.8 10.9" stroke="#0a2e06" stroke-opacity="0.38"/><path d="M60.9 77.3 L60.3 66.9" stroke="#377a1e" stroke-opacity="0.49"/><path d="M-1.7 31.4 L-0.9 22.6" stroke="#0a2e06" stroke-opacity="0.53"/><path d="M128.8 31.6 L130.2 25.3" stroke="#0a2e06" stroke-opacity="0.29"/><path d="M131.1 64.5 L129.9 52.5" stroke="#2b6a18" stroke-opacity="0.35"/><path d="M90.5 85.5 L89.1 78.7" stroke="#377a1e" stroke-opacity="0.34"/><path d="M64.0 82.7 L64.9 69.4" stroke="#0a2e06" stroke-opacity="0.48"/><path d="M74.8 16.5 L75.0 4.2" stroke="#4a9a2a" stroke-opacity="0.32"/><path d="M147.8 97.6 L146.9 87.9" stroke="#2b6a18" stroke-opacity="0.40"/><path d="M33.5 16.9 L33.7 4.7" stroke="#0e3a08" stroke-opacity="0.36"/><path d="M65.2 55.6 L65.2 49.3" stroke="#4a9a2a" stroke-opacity="0.53"/><path d="M142.7 43.2 L143.0 34.0" stroke="#4a9a2a" stroke-opacity="0.30"/><path d="M55.6 54.7 L56.7 49.5" stroke="#4a9a2a" stroke-opacity="0.31"/><path d="M92.4 63.5 L93.8 56.6" stroke="#0e3a08" stroke-opacity="0.38"/><path d="M126.1 94.6 L125.6 81.0" stroke="#0e3a08" stroke-opacity="0.50"/><path d="M164.1 40.0 L165.2 34.7" stroke="#4a9a2a" stroke-opacity="0.42"/><path d="M74.5 107.6 L75.0 94.5" stroke="#4a9a2a" stroke-opacity="0.51"/><path d="M152.0 75.0 L152.4 69.2" stroke="#0e3a08" stroke-opacity="0.42"/><path d="M157.7 73.9 L157.3 65.3" stroke="#2b6a18" stroke-opacity="0.50"/><path d="M37.3 77.2 L35.9 70.7" stroke="#0e3a08" stroke-opacity="0.53"/><path d="M90.3 11.2 L91.0 -2.1" stroke="#0e3a08" stroke-opacity="0.49"/><path d="M106.0 104.0 L104.5 98.5" stroke="#377a1e" stroke-opacity="0.35"/><path d="M31.2 83.9 L30.0 73.6" stroke="#2b6a18" stroke-opacity="0.48"/><path d="M52.1 28.1 L51.9 22.0" stroke="#2b6a18" stroke-opacity="0.36"/><path d="M132.9 104.0 L131.9 91.0" stroke="#2b6a18" stroke-opacity="0.47"/><path d="M4.0 99.4 L5.2 92.4" stroke="#0a2e06" stroke-opacity="0.51"/><path d="M21.3 47.8 L21.7 42.0" stroke="#2b6a18" stroke-opacity="0.50"/><path d="M73.5 43.1 L73.1 30.7" stroke="#2b6a18" stroke-opacity="0.28"/><path d="M53.4 78.9 L52.4 72.3" stroke="#2b6a18" stroke-opacity="0.42"/><path d="M143.4 31.7 L143.6 23.0" stroke="#377a1e" stroke-opacity="0.26"/><path d="M47.5 86.8 L48.7 79.4" stroke="#4a9a2a" stroke-opacity="0.35"/><path d="M17.1 103.3 L18.1 97.8" stroke="#377a1e" stroke-opacity="0.42"/><path d="M17.9 88.0 L19.4 74.3" stroke="#2b6a18" stroke-opacity="0.55"/><path d="M152.5 12.8 L153.2 5.2" stroke="#377a1e" stroke-opacity="0.27"/><path d="M47.0 102.9 L45.9 97.8" stroke="#0a2e06" stroke-opacity="0.35"/><path d="M-1.7 92.1 L-3.1 82.4" stroke="#377a1e" stroke-opacity="0.36"/><path d="M66.3 30.7 L65.5 24.1" stroke="#377a1e" stroke-opacity="0.41"/><path d="M27.3 70.5 L28.1 58.1" stroke="#0a2e06" stroke-opacity="0.47"/><path d="M27.3 20.4 L26.4 9.4" stroke="#377a1e" stroke-opacity="0.42"/><path d="M9.0 80.6 L8.5 71.9" stroke="#4a9a2a" stroke-opacity="0.41"/><path d="M45.1 75.6 L46.3 62.1" stroke="#4a9a2a" stroke-opacity="0.25"/><path d="M77.6 94.0 L79.1 86.6" stroke="#377a1e" stroke-opacity="0.42"/><path d="M4.1 78.9 L5.4 68.7" stroke="#4a9a2a" stroke-opacity="0.36"/><path d="M159.8 10.7 L160.9 2.5" stroke="#377a1e" stroke-opacity="0.49"/><path d="M51.6 78.1 L50.4 69.7" stroke="#4a9a2a" stroke-opacity="0.34"/><path d="M120.1 47.1 L119.3 41.9" stroke="#0a2e06" stroke-opacity="0.29"/><path d="M12.8 66.5 L13.7 60.0" stroke="#0e3a08" stroke-opacity="0.33"/><path d="M3.0 16.4 L4.0 5.1" stroke="#377a1e" stroke-opacity="0.33"/><path d="M104.4 50.9 L105.5 43.7" stroke="#2b6a18" stroke-opacity="0.28"/><path d="M117.8 5.9 L118.5 -0.3" stroke="#2b6a18" stroke-opacity="0.43"/><path d="M16.4 20.7 L17.5 7.8" stroke="#0a2e06" stroke-opacity="0.43"/><path d="M22.6 66.9 L21.1 55.1" stroke="#377a1e" stroke-opacity="0.53"/><path d="M104.0 78.2 L103.7 67.9" stroke="#0a2e06" stroke-opacity="0.41"/><path d="M155.2 84.6 L155.8 76.6" stroke="#377a1e" stroke-opacity="0.50"/><path d="M138.8 68.1 L139.8 54.3" stroke="#0e3a08" stroke-opacity="0.49"/><path d="M6.9 62.9 L6.7 49.3" stroke="#0e3a08" stroke-opacity="0.32"/><path d="M103.7 43.0 L102.8 33.3" stroke="#4a9a2a" stroke-opacity="0.35"/><path d="M109.7 27.5 L111.1 18.7" stroke="#2b6a18" stroke-opacity="0.48"/><path d="M103.7 92.9 L104.2 80.0" stroke="#4a9a2a" stroke-opacity="0.26"/><path d="M42.4 73.7 L41.0 66.2" stroke="#0a2e06" stroke-opacity="0.49"/><path d="M14.8 12.9 L14.1 7.8" stroke="#377a1e" stroke-opacity="0.54"/><path d="M49.0 69.1 L50.3 63.0" stroke="#0a2e06" stroke-opacity="0.54"/><path d="M148.5 14.2 L148.6 3.9" stroke="#377a1e" stroke-opacity="0.38"/><path d="M145.8 101.3 L144.6 91.1" stroke="#0e3a08" stroke-opacity="0.32"/><path d="M89.2 93.7 L88.9 83.2" stroke="#0a2e06" stroke-opacity="0.32"/><path d="M89.6 46.5 L89.5 33.5" stroke="#0e3a08" stroke-opacity="0.43"/><path d="M49.9 27.4 L51.3 20.4" stroke="#0a2e06" stroke-opacity="0.41"/><path d="M64.2 98.5 L63.7 92.0" stroke="#377a1e" stroke-opacity="0.35"/><path d="M43.1 94.2 L42.1 87.2" stroke="#4a9a2a" stroke-opacity="0.48"/><path d="M9.2 95.4 L10.2 86.5" stroke="#4a9a2a" stroke-opacity="0.41"/><path d="M57.1 84.8 L57.6 75.1" stroke="#377a1e" stroke-opacity="0.38"/><path d="M21.4 26.8 L21.5 16.3" stroke="#0e3a08" stroke-opacity="0.50"/><path d="M121.4 84.9 L121.8 73.0" stroke="#2b6a18" stroke-opacity="0.33"/><path d="M103.6 77.6 L104.4 68.9" stroke="#4a9a2a" stroke-opacity="0.25"/><path d="M95.8 60.9 L96.9 47.3" stroke="#0a2e06" stroke-opacity="0.29"/><path d="M44.6 66.2 L44.0 60.2" stroke="#2b6a18" stroke-opacity="0.46"/><path d="M56.9 41.8 L56.4 32.1" stroke="#0a2e06" stroke-opacity="0.37"/><path d="M129.4 93.7 L129.6 84.2" stroke="#2b6a18" stroke-opacity="0.34"/><path d="M132.1 49.1 L133.4 40.7" stroke="#377a1e" stroke-opacity="0.28"/><path d="M52.1 96.1 L51.9 83.6" stroke="#0e3a08" stroke-opacity="0.31"/><path d="M150.1 1.5 L149.5 -3.9" stroke="#0a2e06" stroke-opacity="0.52"/><path d="M87.6 38.4 L87.6 27.8" stroke="#2b6a18" stroke-opacity="0.41"/><path d="M112.4 44.1 L112.3 35.9" stroke="#0a2e06" stroke-opacity="0.45"/><path d="M-0.3 9.2 L-0.6 2.2" stroke="#2b6a18" stroke-opacity="0.36"/><path d="M91.7 68.2 L91.6 55.3" stroke="#2b6a18" stroke-opacity="0.40"/><path d="M102.3 107.7 L101.1 99.6" stroke="#0a2e06" stroke-opacity="0.47"/><path d="M58.6 39.2 L57.4 33.5" stroke="#0e3a08" stroke-opacity="0.40"/><path d="M147.4 79.8 L147.1 67.4" stroke="#0a2e06" stroke-opacity="0.52"/><path d="M24.1 35.0 L23.9 25.4" stroke="#0a2e06" stroke-opacity="0.52"/><path d="M8.0 60.3 L8.5 54.3" stroke="#0a2e06" stroke-opacity="0.55"/><path d="M5.1 50.3 L5.2 38.2" stroke="#0e3a08" stroke-opacity="0.46"/><path d="M151.1 42.6 L150.2 36.7" stroke="#4a9a2a" stroke-opacity="0.45"/><path d="M81.1 60.5 L80.1 53.1" stroke="#0a2e06" stroke-opacity="0.40"/><path d="M31.2 64.5 L30.0 58.2" stroke="#0a2e06" stroke-opacity="0.48"/><path d="M14.7 22.6 L15.6 12.9" stroke="#2b6a18" stroke-opacity="0.43"/><path d="M8.4 8.2 L7.6 -3.7" stroke="#0e3a08" stroke-opacity="0.29"/><path d="M44.0 9.1 L43.1 -1.5" stroke="#0a2e06" stroke-opacity="0.27"/><path d="M102.2 4.0 L103.6 -2.9" stroke="#2b6a18" stroke-opacity="0.42"/><path d="M71.4 67.4 L71.7 60.1" stroke="#4a9a2a" stroke-opacity="0.30"/><path d="M27.0 8.5 L27.3 -4.4" stroke="#2b6a18" stroke-opacity="0.34"/><path d="M158.3 60.6 L158.8 47.0" stroke="#377a1e" stroke-opacity="0.45"/><path d="M95.7 47.0 L96.8 38.4" stroke="#2b6a18" stroke-opacity="0.26"/><path d="M12.6 21.3 L12.0 12.8" stroke="#4a9a2a" stroke-opacity="0.54"/><path d="M91.8 16.9 L92.2 7.1" stroke="#2b6a18" stroke-opacity="0.35"/><path d="M158.5 52.6 L157.6 39.3" stroke="#0a2e06" stroke-opacity="0.32"/><path d="M45.4 25.2 L44.3 19.9" stroke="#4a9a2a" stroke-opacity="0.35"/><path d="M115.9 12.2 L115.8 4.7" stroke="#377a1e" stroke-opacity="0.42"/><path d="M130.8 28.5 L130.4 20.2" stroke="#377a1e" stroke-opacity="0.47"/><path d="M158.1 30.4 L159.1 16.8" stroke="#0a2e06" stroke-opacity="0.31"/><path d="M110.8 107.9 L111.0 93.9" stroke="#0a2e06" stroke-opacity="0.52"/><path d="M59.5 31.3 L60.2 20.9" stroke="#377a1e" stroke-opacity="0.29"/><path d="M111.2 17.3 L111.9 4.6" stroke="#2b6a18" stroke-opacity="0.26"/><path d="M22.2 8.0 L21.4 -3.4" stroke="#377a1e" stroke-opacity="0.48"/><path d="M29.4 94.2 L30.2 88.6" stroke="#0e3a08" stroke-opacity="0.49"/><path d="M30.2 76.3 L30.9 70.5" stroke="#0e3a08" stroke-opacity="0.29"/><path d="M45.2 50.5 L44.2 37.4" stroke="#377a1e" stroke-opacity="0.53"/><path d="M59.2 90.2 L59.8 78.9" stroke="#2b6a18" stroke-opacity="0.26"/><path d="M75.3 108.6 L74.1 100.0" stroke="#4a9a2a" stroke-opacity="0.30"/><path d="M150.4 83.5 L150.7 72.1" stroke="#4a9a2a" stroke-opacity="0.37"/><path d="M69.9 80.9 L70.3 74.5" stroke="#4a9a2a" stroke-opacity="0.42"/><path d="M155.2 61.3 L154.5 54.3" stroke="#2b6a18" stroke-opacity="0.46"/><path d="M70.6 75.0 L71.4 66.9" stroke="#4a9a2a" stroke-opacity="0.28"/><path d="M107.5 102.5 L106.1 89.6" stroke="#0a2e06" stroke-opacity="0.43"/><path d="M38.8 18.8 L38.4 6.7" stroke="#377a1e" stroke-opacity="0.48"/><path d="M150.6 50.5 L149.9 38.8" stroke="#0a2e06" stroke-opacity="0.50"/><path d="M13.0 103.2 L13.7 94.4" stroke="#0e3a08" stroke-opacity="0.46"/><path d="M136.6 70.0 L135.7 61.0" stroke="#4a9a2a" stroke-opacity="0.45"/><path d="M110.4 95.9 L109.0 83.9" stroke="#2b6a18" stroke-opacity="0.48"/><path d="M115.4 87.0 L116.2 79.6" stroke="#0a2e06" stroke-opacity="0.30"/><path d="M37.4 36.0 L37.1 22.3" stroke="#377a1e" stroke-opacity="0.36"/><path d="M31.6 33.8 L30.8 27.6" stroke="#2b6a18" stroke-opacity="0.45"/><path d="M38.4 58.1 L37.3 49.1" stroke="#0e3a08" stroke-opacity="0.46"/><path d="M116.2 63.9 L117.0 56.7" stroke="#4a9a2a" stroke-opacity="0.41"/><path d="M26.3 75.4 L26.0 65.0" stroke="#2b6a18" stroke-opacity="0.50"/><path d="M32.5 72.6 L31.1 67.5" stroke="#2b6a18" stroke-opacity="0.31"/><path d="M44.9 27.0 L43.9 15.7" stroke="#2b6a18" stroke-opacity="0.54"/><path d="M72.3 62.4 L70.9 54.8" stroke="#0a2e06" stroke-opacity="0.27"/><path d="M163.7 79.6 L163.9 73.8" stroke="#0e3a08" stroke-opacity="0.54"/><path d="M16.2 55.2 L15.6 46.3" stroke="#377a1e" stroke-opacity="0.49"/><path d="M58.0 12.1 L58.5 4.6" stroke="#0a2e06" stroke-opacity="0.53"/><path d="M40.0 27.1 L39.7 20.8" stroke="#4a9a2a" stroke-opacity="0.26"/><path d="M22.2 47.3 L23.5 33.6" stroke="#0a2e06" stroke-opacity="0.50"/><path d="M26.1 89.9 L25.2 77.4" stroke="#0a2e06" stroke-opacity="0.35"/><path d="M135.8 36.9 L136.8 28.6" stroke="#0a2e06" stroke-opacity="0.53"/><path d="M40.3 7.0 L41.7 1.1" stroke="#2b6a18" stroke-opacity="0.52"/><path d="M80.6 53.9 L80.9 47.5" stroke="#0e3a08" stroke-opacity="0.43"/><path d="M21.7 25.1 L20.3 18.9" stroke="#2b6a18" stroke-opacity="0.28"/><path d="M71.4 26.5 L71.7 15.0" stroke="#4a9a2a" stroke-opacity="0.26"/><path d="M137.2 55.0 L137.2 48.7" stroke="#4a9a2a" stroke-opacity="0.45"/><path d="M68.3 39.5 L67.3 30.6" stroke="#377a1e" stroke-opacity="0.52"/><path d="M47.4 51.6 L47.3 41.5" stroke="#0e3a08" stroke-opacity="0.42"/><path d="M88.6 58.1 L89.7 49.3" stroke="#0a2e06" stroke-opacity="0.52"/><path d="M160.7 106.6 L160.2 96.0" stroke="#4a9a2a" stroke-opacity="0.47"/><path d="M108.0 63.1 L108.4 54.3" stroke="#0e3a08" stroke-opacity="0.39"/><path d="M48.0 44.0 L47.2 31.1" stroke="#4a9a2a" stroke-opacity="0.50"/><path d="M121.5 73.9 L121.8 67.6" stroke="#0a2e06" stroke-opacity="0.36"/><path d="M67.5 60.7 L66.7 50.6" stroke="#2b6a18" stroke-opacity="0.33"/><path d="M159.7 28.0 L159.0 16.3" stroke="#377a1e" stroke-opacity="0.51"/><path d="M13.9 58.0 L13.7 50.7" stroke="#2b6a18" stroke-opacity="0.32"/><path d="M88.4 79.8 L89.4 68.2" stroke="#0a2e06" stroke-opacity="0.42"/><path d="M111.5 85.2 L112.1 79.0" stroke="#0a2e06" stroke-opacity="0.42"/><path d="M124.4 21.0 L125.4 7.0" stroke="#0a2e06" stroke-opacity="0.28"/><path d="M63.5 26.6 L62.2 13.0" stroke="#0a2e06" stroke-opacity="0.39"/><path d="M60.4 68.6 L58.9 60.0" stroke="#4a9a2a" stroke-opacity="0.36"/><path d="M97.2 25.1 L98.4 17.4" stroke="#377a1e" stroke-opacity="0.38"/><path d="M101.7 96.6 L102.5 86.6" stroke="#0e3a08" stroke-opacity="0.30"/><path d="M55.0 86.3 L54.6 75.2" stroke="#0e3a08" stroke-opacity="0.29"/><path d="M121.1 106.0 L120.7 94.5" stroke="#4a9a2a" stroke-opacity="0.49"/><path d="M57.4 39.8 L57.9 29.4" stroke="#4a9a2a" stroke-opacity="0.53"/><path d="M40.5 24.3 L41.4 15.3" stroke="#0a2e06" stroke-opacity="0.38"/><path d="M79.5 10.1 L78.9 2.7" stroke="#377a1e" stroke-opacity="0.42"/><path d="M112.8 41.3 L113.3 35.0" stroke="#0e3a08" stroke-opacity="0.41"/><path d="M133.0 99.7 L132.9 94.6" stroke="#0e3a08" stroke-opacity="0.55"/><path d="M78.8 10.9 L79.8 -1.7" stroke="#4a9a2a" stroke-opacity="0.30"/><path d="M111.5 45.5 L111.3 36.2" stroke="#377a1e" stroke-opacity="0.46"/><path d="M36.3 105.2 L35.4 95.6" stroke="#0e3a08" stroke-opacity="0.35"/><path d="M147.3 62.3 L148.0 56.9" stroke="#377a1e" stroke-opacity="0.50"/><path d="M53.3 57.6 L53.6 44.2" stroke="#0e3a08" stroke-opacity="0.25"/><path d="M53.7 6.3 L52.7 -2.8" stroke="#0a2e06" stroke-opacity="0.26"/><path d="M110.1 31.1 L109.6 23.6" stroke="#0a2e06" stroke-opacity="0.55"/><path d="M93.8 62.6 L95.0 56.4" stroke="#4a9a2a" stroke-opacity="0.52"/><path d="M13.9 24.8 L13.5 15.9" stroke="#0a2e06" stroke-opacity="0.44"/><path d="M45.0 91.4 L44.4 78.5" stroke="#377a1e" stroke-opacity="0.45"/><path d="M125.5 82.2 L125.6 72.7" stroke="#377a1e" stroke-opacity="0.36"/><path d="M65.8 9.4 L66.6 1.3" stroke="#0e3a08" stroke-opacity="0.52"/><path d="M82.1 101.2 L81.2 88.9" stroke="#0e3a08" stroke-opacity="0.30"/><path d="M146.4 74.1 L145.8 65.5" stroke="#2b6a18" stroke-opacity="0.42"/><path d="M26.2 9.7 L26.4 2.0" stroke="#0e3a08" stroke-opacity="0.33"/><path d="M108.0 102.1 L106.8 96.4" stroke="#377a1e" stroke-opacity="0.43"/><path d="M27.9 69.8 L28.4 56.0" stroke="#0e3a08" stroke-opacity="0.54"/><path d="M118.4 104.4 L117.8 91.8" stroke="#0e3a08" stroke-opacity="0.52"/><path d="M41.0 3.9 L39.6 -2.6" stroke="#0e3a08" stroke-opacity="0.32"/><path d="M6.0 55.1 L6.4 42.0" stroke="#0e3a08" stroke-opacity="0.51"/><path d="M30.9 85.7 L29.6 72.1" stroke="#0a2e06" stroke-opacity="0.26"/><path d="M134.3 66.9 L134.4 55.4" stroke="#4a9a2a" stroke-opacity="0.31"/><path d="M144.2 75.5 L145.3 62.2" stroke="#377a1e" stroke-opacity="0.35"/><path d="M2.5 56.6 L3.6 46.1" stroke="#0e3a08" stroke-opacity="0.30"/><path d="M131.0 14.7 L130.7 4.2" stroke="#2b6a18" stroke-opacity="0.55"/><path d="M155.0 91.9 L156.5 86.7" stroke="#0e3a08" stroke-opacity="0.42"/><path d="M7.4 71.0 L5.9 59.5" stroke="#0e3a08" stroke-opacity="0.30"/><path d="M33.2 63.2 L32.9 50.6" stroke="#0e3a08" stroke-opacity="0.49"/><path d="M88.0 66.8 L87.1 56.8" stroke="#0a2e06" stroke-opacity="0.42"/><path d="M101.3 89.7 L100.7 80.4" stroke="#4a9a2a" stroke-opacity="0.48"/><path d="M127.0 106.7 L127.1 97.6" stroke="#0e3a08" stroke-opacity="0.36"/><path d="M43.7 31.6 L44.6 21.6" stroke="#4a9a2a" stroke-opacity="0.45"/><path d="M58.5 106.0 L58.9 98.9" stroke="#4a9a2a" stroke-opacity="0.53"/><path d="M18.4 58.9 L18.7 52.0" stroke="#377a1e" stroke-opacity="0.33"/><path d="M121.2 102.6 L120.7 89.8" stroke="#377a1e" stroke-opacity="0.41"/><path d="M116.5 54.1 L116.0 41.4" stroke="#377a1e" stroke-opacity="0.44"/><path d="M131.7 51.2 L132.4 43.3" stroke="#4a9a2a" stroke-opacity="0.28"/><path d="M8.9 71.4 L9.1 62.8" stroke="#0e3a08" stroke-opacity="0.27"/><path d="M66.5 105.0 L65.0 91.5" stroke="#377a1e" stroke-opacity="0.26"/><path d="M116.4 28.6 L116.9 20.4" stroke="#0e3a08" stroke-opacity="0.48"/><path d="M47.8 106.4 L47.8 99.4" stroke="#0a2e06" stroke-opacity="0.49"/><path d="M154.0 89.4 L153.3 75.8" stroke="#377a1e" stroke-opacity="0.50"/><path d="M53.4 59.0 L53.7 46.0" stroke="#377a1e" stroke-opacity="0.35"/><path d="M157.8 22.7 L158.5 17.3" stroke="#377a1e" stroke-opacity="0.51"/><path d="M5.7 85.2 L7.2 76.3" stroke="#2b6a18" stroke-opacity="0.51"/><path d="M47.7 3.6 L47.1 -2.4" stroke="#4a9a2a" stroke-opacity="0.29"/><path d="M81.9 43.7 L80.7 31.9" stroke="#2b6a18" stroke-opacity="0.45"/><path d="M54.7 102.9 L53.3 91.4" stroke="#0e3a08" stroke-opacity="0.54"/><path d="M37.2 89.4 L37.5 78.2" stroke="#4a9a2a" stroke-opacity="0.29"/><path d="M94.0 79.9 L93.4 68.3" stroke="#4a9a2a" stroke-opacity="0.55"/><path d="M144.7 17.0 L143.2 7.6" stroke="#377a1e" stroke-opacity="0.41"/><path d="M35.4 62.4 L34.2 51.7" stroke="#0a2e06" stroke-opacity="0.40"/><path d="M57.0 60.4 L58.1 47.1" stroke="#0e3a08" stroke-opacity="0.54"/><path d="M160.3 24.2 L159.6 18.5" stroke="#377a1e" stroke-opacity="0.25"/><path d="M159.4 21.1 L158.7 15.6" stroke="#0a2e06" stroke-opacity="0.54"/><path d="M52.4 8.4 L53.0 -0.7" stroke="#0e3a08" stroke-opacity="0.41"/><path d="M162.1 98.2 L162.2 86.8" stroke="#2b6a18" stroke-opacity="0.38"/><path d="M62.0 22.7 L63.2 10.9" stroke="#2b6a18" stroke-opacity="0.49"/><path d="M104.0 29.6 L104.7 20.1" stroke="#0e3a08" stroke-opacity="0.46"/><path d="M163.5 92.7 L164.4 81.7" stroke="#4a9a2a" stroke-opacity="0.50"/><path d="M149.7 11.4 L149.6 0.2" stroke="#0e3a08" stroke-opacity="0.46"/><path d="M109.6 53.0 L110.6 42.8" stroke="#2b6a18" stroke-opacity="0.47"/><path d="M83.2 71.1 L84.1 57.2" stroke="#377a1e" stroke-opacity="0.50"/><path d="M143.2 37.9 L143.7 32.3" stroke="#0a2e06" stroke-opacity="0.33"/><path d="M136.0 14.7 L136.8 2.6" stroke="#377a1e" stroke-opacity="0.53"/><path d="M41.8 96.0 L41.7 83.3" stroke="#0e3a08" stroke-opacity="0.41"/><path d="M34.9 23.3 L34.1 9.9" stroke="#0a2e06" stroke-opacity="0.36"/><path d="M26.2 44.5 L26.1 33.4" stroke="#377a1e" stroke-opacity="0.50"/><path d="M105.0 94.9 L104.6 81.9" stroke="#4a9a2a" stroke-opacity="0.35"/><path d="M142.2 48.6 L141.8 39.9" stroke="#0e3a08" stroke-opacity="0.36"/><path d="M108.7 57.6 L108.1 49.9" stroke="#4a9a2a" stroke-opacity="0.33"/><path d="M72.5 17.5 L71.5 6.7" stroke="#377a1e" stroke-opacity="0.48"/><path d="M111.6 43.2 L111.7 33.5" stroke="#377a1e" stroke-opacity="0.44"/><path d="M131.9 31.6 L130.5 21.6" stroke="#4a9a2a" stroke-opacity="0.42"/><path d="M27.8 77.9 L27.1 70.4" stroke="#0e3a08" stroke-opacity="0.33"/><path d="M71.2 59.6 L70.9 50.1" stroke="#4a9a2a" stroke-opacity="0.31"/><path d="M130.3 68.2 L129.9 59.9" stroke="#4a9a2a" stroke-opacity="0.47"/><path d="M5.0 87.8 L5.9 74.1" stroke="#2b6a18" stroke-opacity="0.44"/><path d="M56.8 45.7 L58.3 35.5" stroke="#0a2e06" stroke-opacity="0.31"/><path d="M116.9 45.1 L115.6 34.1" stroke="#0e3a08" stroke-opacity="0.51"/><path d="M72.4 45.0 L72.6 36.3" stroke="#4a9a2a" stroke-opacity="0.28"/><path d="M154.2 77.5 L152.9 68.6" stroke="#2b6a18" stroke-opacity="0.30"/><path d="M64.4 21.0 L65.1 9.2" stroke="#4a9a2a" stroke-opacity="0.45"/><path d="M65.1 10.4 L64.7 -0.7" stroke="#0a2e06" stroke-opacity="0.35"/><path d="M74.8 17.1 L73.6 4.5" stroke="#0a2e06" stroke-opacity="0.50"/><path d="M12.7 84.2 L11.8 74.1" stroke="#4a9a2a" stroke-opacity="0.50"/><path d="M54.0 95.6 L53.0 85.6" stroke="#2b6a18" stroke-opacity="0.50"/><path d="M66.0 10.9 L66.0 0.3" stroke="#0e3a08" stroke-opacity="0.35"/><path d="M-1.0 106.3 L-1.3 98.8" stroke="#0e3a08" stroke-opacity="0.28"/><path d="M108.9 34.9 L108.3 26.4" stroke="#2b6a18" stroke-opacity="0.45"/><path d="M39.5 43.8 L38.6 34.9" stroke="#0a2e06" stroke-opacity="0.33"/><path d="M6.7 59.7 L7.3 51.4" stroke="#2b6a18" stroke-opacity="0.45"/><path d="M21.6 100.8 L21.8 92.7" stroke="#2b6a18" stroke-opacity="0.53"/><path d="M6.5 37.8 L7.5 28.0" stroke="#2b6a18" stroke-opacity="0.54"/><path d="M3.9 27.0 L4.8 18.1" stroke="#377a1e" stroke-opacity="0.46"/><path d="M96.9 56.1 L96.0 42.7" stroke="#2b6a18" stroke-opacity="0.31"/><path d="M28.1 91.2 L26.8 85.1" stroke="#377a1e" stroke-opacity="0.51"/><path d="M97.6 27.2 L96.6 13.9" stroke="#0a2e06" stroke-opacity="0.47"/><path d="M34.9 82.4 L33.9 70.6" stroke="#377a1e" stroke-opacity="0.41"/><path d="M127.9 79.8 L128.7 70.1" stroke="#2b6a18" stroke-opacity="0.28"/><path d="M156.8 49.5 L156.6 38.5" stroke="#0e3a08" stroke-opacity="0.46"/><path d="M68.9 99.5 L69.9 86.2" stroke="#377a1e" stroke-opacity="0.26"/><path d="M47.0 29.7 L47.7 19.4" stroke="#0e3a08" stroke-opacity="0.46"/><path d="M49.7 32.0 L50.6 22.1" stroke="#377a1e" stroke-opacity="0.30"/><path d="M161.7 41.4 L161.0 36.1" stroke="#2b6a18" stroke-opacity="0.30"/><path d="M107.4 74.7 L107.1 67.9" stroke="#377a1e" stroke-opacity="0.47"/><path d="M111.4 19.5 L110.5 7.0" stroke="#4a9a2a" stroke-opacity="0.45"/><path d="M107.6 55.7 L108.3 50.1" stroke="#2b6a18" stroke-opacity="0.35"/><path d="M80.9 98.5 L80.3 92.6" stroke="#2b6a18" stroke-opacity="0.33"/><path d="M95.5 81.2 L96.7 74.4" stroke="#2b6a18" stroke-opacity="0.33"/><path d="M139.2 32.2 L138.0 18.9" stroke="#4a9a2a" stroke-opacity="0.42"/><path d="M-1.8 21.8 L-2.3 15.4" stroke="#0e3a08" stroke-opacity="0.27"/><path d="M73.1 32.7 L74.1 21.0" stroke="#377a1e" stroke-opacity="0.28"/><path d="M133.1 80.1 L132.1 71.0" stroke="#0a2e06" stroke-opacity="0.28"/><path d="M63.7 4.1 L64.1 -1.2" stroke="#0a2e06" stroke-opacity="0.28"/><path d="M20.0 63.9 L20.7 55.7" stroke="#0e3a08" stroke-opacity="0.47"/><path d="M58.0 70.4 L59.1 64.6" stroke="#4a9a2a" stroke-opacity="0.50"/><path d="M78.2 16.5 L78.2 10.6" stroke="#377a1e" stroke-opacity="0.29"/><path d="M87.5 16.6 L86.1 7.3" stroke="#377a1e" stroke-opacity="0.42"/><path d="M40.8 102.2 L39.7 94.7" stroke="#0a2e06" stroke-opacity="0.31"/><path d="M38.1 96.0 L39.4 86.5" stroke="#4a9a2a" stroke-opacity="0.25"/><path d="M79.6 88.2 L78.6 78.1" stroke="#377a1e" stroke-opacity="0.28"/><path d="M138.5 108.6 L137.8 99.8" stroke="#0a2e06" stroke-opacity="0.41"/><path d="M146.7 14.1 L147.5 3.9" stroke="#377a1e" stroke-opacity="0.32"/><path d="M83.7 93.4 L85.1 81.0" stroke="#4a9a2a" stroke-opacity="0.43"/><path d="M4.9 71.1 L5.8 59.9" stroke="#0e3a08" stroke-opacity="0.35"/><path d="M75.1 96.8 L73.7 91.7" stroke="#2b6a18" stroke-opacity="0.49"/><path d="M129.7 20.1 L129.2 10.5" stroke="#377a1e" stroke-opacity="0.30"/><path d="M21.4 22.8 L20.1 15.8" stroke="#0e3a08" stroke-opacity="0.46"/><path d="M-1.5 92.8 L-0.3 87.5" stroke="#0a2e06" stroke-opacity="0.48"/><path d="M123.5 68.6 L124.4 61.8" stroke="#4a9a2a" stroke-opacity="0.50"/><path d="M13.4 78.5 L13.4 70.3" stroke="#377a1e" stroke-opacity="0.49"/><path d="M126.9 54.4 L127.7 47.1" stroke="#0e3a08" stroke-opacity="0.52"/><path d="M137.0 89.5 L137.4 79.2" stroke="#2b6a18" stroke-opacity="0.37"/><path d="M154.6 60.6 L155.9 48.9" stroke="#0a2e06" stroke-opacity="0.41"/><path d="M17.3 108.8 L18.4 96.7" stroke="#0e3a08" stroke-opacity="0.48"/><path d="M38.1 66.8 L39.4 56.7" stroke="#2b6a18" stroke-opacity="0.42"/><path d="M146.6 11.2 L147.1 0.3" stroke="#2b6a18" stroke-opacity="0.49"/><path d="M155.3 90.4 L155.8 81.7" stroke="#4a9a2a" stroke-opacity="0.32"/><path d="M130.2 77.8 L128.7 64.6" stroke="#2b6a18" stroke-opacity="0.49"/><path d="M79.7 2.7 L80.0 -3.3" stroke="#2b6a18" stroke-opacity="0.38"/><path d="M74.4 37.1 L74.3 30.2" stroke="#0e3a08" stroke-opacity="0.37"/><path d="M3.4 44.2 L3.3 30.3" stroke="#377a1e" stroke-opacity="0.46"/><path d="M108.4 85.8 L109.6 79.7" stroke="#4a9a2a" stroke-opacity="0.36"/><path d="M63.1 36.3 L64.2 29.9" stroke="#377a1e" stroke-opacity="0.32"/><path d="M99.9 97.4 L101.0 88.9" stroke="#2b6a18" stroke-opacity="0.35"/><path d="M130.1 71.4 L128.6 58.7" stroke="#377a1e" stroke-opacity="0.37"/><path d="M140.5 13.1 L139.8 5.9" stroke="#0a2e06" stroke-opacity="0.49"/><path d="M56.8 15.6 L55.7 5.6" stroke="#0a2e06" stroke-opacity="0.45"/><path d="M123.8 30.3 L123.6 21.6" stroke="#0a2e06" stroke-opacity="0.44"/><path d="M158.0 43.9 L158.9 33.0" stroke="#2b6a18" stroke-opacity="0.53"/><path d="M8.0 73.2 L9.0 63.7" stroke="#4a9a2a" stroke-opacity="0.27"/><path d="M112.2 62.6 L112.8 53.5" stroke="#0a2e06" stroke-opacity="0.52"/><path d="M123.2 6.6 L124.5 -1.3" stroke="#377a1e" stroke-opacity="0.25"/><path d="M43.3 28.0 L43.0 14.7" stroke="#0a2e06" stroke-opacity="0.26"/><path d="M122.8 69.9 L122.9 62.4" stroke="#377a1e" stroke-opacity="0.34"/><path d="M68.3 108.5 L69.7 97.7" stroke="#2b6a18" stroke-opacity="0.40"/><path d="M58.2 97.7 L56.8 89.8" stroke="#0a2e06" stroke-opacity="0.40"/><path d="M86.9 95.6 L87.6 88.8" stroke="#4a9a2a" stroke-opacity="0.30"/><path d="M26.5 33.2 L27.3 27.8" stroke="#0e3a08" stroke-opacity="0.54"/><path d="M58.1 75.3 L57.6 67.8" stroke="#2b6a18" stroke-opacity="0.31"/><path d="M71.2 13.7 L72.1 6.4" stroke="#2b6a18" stroke-opacity="0.35"/><path d="M76.9 20.1 L77.9 6.8" stroke="#0a2e06" stroke-opacity="0.39"/><path d="M104.4 84.6 L104.5 76.8" stroke="#377a1e" stroke-opacity="0.33"/><path d="M108.4 92.8 L108.0 84.1" stroke="#4a9a2a" stroke-opacity="0.33"/><path d="M151.2 58.2 L152.0 50.6" stroke="#4a9a2a" stroke-opacity="0.33"/><path d="M4.9 91.9 L4.5 81.8" stroke="#0e3a08" stroke-opacity="0.43"/><path d="M161.7 100.9 L162.3 88.0" stroke="#4a9a2a" stroke-opacity="0.48"/><path d="M66.9 85.8 L66.0 79.8" stroke="#0e3a08" stroke-opacity="0.30"/><path d="M118.7 79.0 L120.0 72.9" stroke="#2b6a18" stroke-opacity="0.37"/><path d="M122.0 39.4 L121.0 30.9" stroke="#0e3a08" stroke-opacity="0.35"/><path d="M143.6 60.5 L143.1 50.8" stroke="#0e3a08" stroke-opacity="0.29"/><path d="M9.0 47.9 L9.2 38.4" stroke="#0a2e06" stroke-opacity="0.45"/><path d="M65.4 62.7 L65.9 55.2" stroke="#377a1e" stroke-opacity="0.30"/><path d="M123.9 60.6 L124.9 47.6" stroke="#4a9a2a" stroke-opacity="0.47"/><path d="M106.4 93.4 L105.7 87.3" stroke="#2b6a18" stroke-opacity="0.43"/><path d="M9.2 70.8 L10.5 58.4" stroke="#0e3a08" stroke-opacity="0.43"/><path d="M49.6 42.9 L50.2 32.8" stroke="#4a9a2a" stroke-opacity="0.36"/><path d="M10.1 91.0 L10.8 83.1" stroke="#4a9a2a" stroke-opacity="0.39"/><path d="M72.6 61.6 L73.5 47.9" stroke="#0a2e06" stroke-opacity="0.42"/><path d="M4.6 87.9 L5.9 81.9" stroke="#377a1e" stroke-opacity="0.34"/><path d="M159.1 57.8 L158.2 50.7" stroke="#0a2e06" stroke-opacity="0.49"/><path d="M138.2 89.8 L137.2 79.9" stroke="#4a9a2a" stroke-opacity="0.32"/><path d="M133.4 31.5 L133.7 23.1" stroke="#0e3a08" stroke-opacity="0.47"/><path d="M64.8 59.1 L66.0 48.8" stroke="#377a1e" stroke-opacity="0.45"/><path d="M7.1 43.8 L7.1 34.0" stroke="#0e3a08" stroke-opacity="0.27"/><path d="M20.3 53.8 L19.9 42.7" stroke="#0a2e06" stroke-opacity="0.39"/><path d="M29.7 44.8 L30.9 37.3" stroke="#377a1e" stroke-opacity="0.27"/><path d="M0.8 88.7 L-0.1 76.6" stroke="#377a1e" stroke-opacity="0.48"/><path d="M124.2 90.7 L124.8 83.0" stroke="#4a9a2a" stroke-opacity="0.53"/><path d="M118.2 8.4 L118.6 1.6" stroke="#4a9a2a" stroke-opacity="0.50"/><path d="M122.8 61.5 L122.3 51.5" stroke="#377a1e" stroke-opacity="0.42"/><path d="M57.2 17.7 L55.8 6.1" stroke="#0e3a08" stroke-opacity="0.38"/><path d="M117.1 84.2 L118.3 76.1" stroke="#377a1e" stroke-opacity="0.36"/><path d="M79.2 11.7 L80.1 3.7" stroke="#0e3a08" stroke-opacity="0.39"/><path d="M19.4 16.5 L19.0 6.4" stroke="#0a2e06" stroke-opacity="0.37"/><path d="M107.6 100.2 L109.0 93.4" stroke="#0e3a08" stroke-opacity="0.53"/><path d="M70.9 80.4 L69.5 71.9" stroke="#2b6a18" stroke-opacity="0.29"/><path d="M33.7 64.9 L35.2 56.5" stroke="#4a9a2a" stroke-opacity="0.49"/><path d="M12.4 83.8 L11.1 76.9" stroke="#0a2e06" stroke-opacity="0.41"/><path d="M52.0 73.5 L53.2 60.6" stroke="#2b6a18" stroke-opacity="0.48"/><path d="M-0.8 24.7 L0.4 16.5" stroke="#4a9a2a" stroke-opacity="0.28"/><path d="M155.8 51.4 L156.0 41.2" stroke="#2b6a18" stroke-opacity="0.48"/><path d="M118.1 92.0 L118.0 85.5" stroke="#377a1e" stroke-opacity="0.47"/><path d="M145.1 64.7 L143.8 58.6" stroke="#2b6a18" stroke-opacity="0.43"/><path d="M37.8 105.7 L38.6 98.6" stroke="#2b6a18" stroke-opacity="0.42"/><path d="M35.4 83.4 L36.9 72.5" stroke="#377a1e" stroke-opacity="0.28"/><path d="M132.1 4.4 L133.4 -1.0" stroke="#377a1e" stroke-opacity="0.53"/><path d="M127.5 9.6 L126.8 -0.4" stroke="#0a2e06" stroke-opacity="0.53"/><path d="M23.6 8.7 L24.8 -3.1" stroke="#4a9a2a" stroke-opacity="0.48"/><path d="M14.1 19.8 L12.9 10.0" stroke="#0a2e06" stroke-opacity="0.40"/><path d="M129.4 101.7 L128.0 88.4" stroke="#4a9a2a" stroke-opacity="0.27"/><path d="M106.3 14.0 L107.2 4.0" stroke="#0a2e06" stroke-opacity="0.43"/><path d="M11.0 10.6 L11.5 0.7" stroke="#0e3a08" stroke-opacity="0.39"/><path d="M91.5 23.6 L91.4 16.9" stroke="#0a2e06" stroke-opacity="0.49"/><path d="M18.4 70.1 L18.7 63.3" stroke="#2b6a18" stroke-opacity="0.54"/><path d="M12.4 60.7 L13.5 49.6" stroke="#4a9a2a" stroke-opacity="0.47"/><path d="M139.7 14.0 L139.1 5.6" stroke="#0e3a08" stroke-opacity="0.34"/><path d="M80.5 63.5 L79.2 55.5" stroke="#377a1e" stroke-opacity="0.25"/><path d="M17.0 78.1 L18.4 67.7" stroke="#0a2e06" stroke-opacity="0.37"/><path d="M152.3 62.2 L153.3 55.3" stroke="#4a9a2a" stroke-opacity="0.52"/><path d="M117.7 9.3 L116.3 -1.8" stroke="#2b6a18" stroke-opacity="0.49"/><path d="M101.3 33.1 L100.7 25.8" stroke="#377a1e" stroke-opacity="0.33"/><path d="M56.2 34.9 L57.5 29.1" stroke="#2b6a18" stroke-opacity="0.30"/><path d="M107.5 55.3 L106.8 44.7" stroke="#0e3a08" stroke-opacity="0.33"/><path d="M66.9 4.3 L66.4 -2.8" stroke="#0e3a08" stroke-opacity="0.53"/><path d="M126.7 89.4 L125.5 76.4" stroke="#4a9a2a" stroke-opacity="0.41"/><path d="M135.8 38.6 L134.7 27.9" stroke="#0e3a08" stroke-opacity="0.27"/><path d="M74.5 22.7 L75.7 17.2" stroke="#0a2e06" stroke-opacity="0.32"/><path d="M153.5 61.5 L152.7 49.5" stroke="#4a9a2a" stroke-opacity="0.44"/><path d="M124.1 99.4 L125.6 88.0" stroke="#2b6a18" stroke-opacity="0.46"/><path d="M27.4 52.2 L26.7 41.0" stroke="#0e3a08" stroke-opacity="0.48"/><path d="M40.9 9.1 L41.3 -2.1" stroke="#377a1e" stroke-opacity="0.44"/><path d="M107.5 79.0 L108.1 72.8" stroke="#4a9a2a" stroke-opacity="0.43"/><path d="M48.8 7.3 L47.5 1.7" stroke="#4a9a2a" stroke-opacity="0.27"/><path d="M91.1 81.7 L90.4 70.9" stroke="#0a2e06" stroke-opacity="0.46"/><path d="M126.5 19.6 L127.1 13.7" stroke="#0e3a08" stroke-opacity="0.37"/><path d="M26.9 111.8 L27.9 98.9" stroke="#2b6a18" stroke-opacity="0.35"/><path d="M3.1 89.1 L3.6 82.0" stroke="#377a1e" stroke-opacity="0.49"/><path d="M44.4 2.7 L44.8 -4.0" stroke="#4a9a2a" stroke-opacity="0.30"/><path d="M96.0 71.1 L97.0 64.4" stroke="#377a1e" stroke-opacity="0.39"/><path d="M7.6 27.5 L6.3 21.7" stroke="#0a2e06" stroke-opacity="0.32"/></g><path d="M0 92.6 L21 94 L58 86 L110 96.2 L163 98.5 V273 H0 Z" fill="#b99d61"/><g fill="none" stroke="#111" stroke-width="1.1"><path d="M72 59 C58 72 56 112 72 126"/><path d="M71 60 C52 80 50 148 72 159"/><path d="M70 61 C42 92 38 196 72 220"/></g><rect x="83.8" y="80" width="7.2" height="10.5" rx="2" fill="#1c1c1c"/><path d="M99 60 L99.5 39.5 Q101 37.5 102.5 39.5 L103 60 Z" fill="#d9402b"/><path d="M74 62 L77 55 L98 55.5 L104 59 L107 64 L107 77 L103 81.5 L74 81.5 L70.7 77 L70.7 67 Z" fill="#d8402e"/><path d="M70.7 76 L107 76 L103 81.5 L74 81.5 Z" fill="#a8301f"/><path d="M77 54.9 L97.9 55.5 L96.2 69 L74.1 67.3 Z" fill="#2a2f38" stroke="#c8c8c8" stroke-width="0.6"/><path d="M87 55.2 L85.5 68.2 M75.6 61.5 L97 62.3" stroke="#999" stroke-width="0.5"/><path d="M72 123 L89 120 L92 122 L92 134 L75 135.5 L72 133 Z" fill="#23262d"/><path d="M75 123.5 L89 121.5 L89.5 128 L75.5 129.5 Z" fill="#e8e8e8"/><g stroke="#d8d8d8" stroke-width="0.7"><line x1="92" y1="124" x2="108" y2="123.5"/><line x1="92" y1="127.5" x2="108" y2="127"/><line x1="92" y1="131" x2="108" y2="130.5"/></g><path d="M72 155 L89 152 L92 154 L92 166 L75 167.5 L72 165 Z" fill="#23262d"/><path d="M75 155.5 L89 153.5 L89.5 160 L75.5 161.5 Z" fill="#e8e8e8"/><g stroke="#d8d8d8" stroke-width="0.7"><line x1="92" y1="156" x2="108" y2="155.5"/><line x1="92" y1="159.5" x2="108" y2="159"/><line x1="92" y1="163" x2="108" y2="162.5"/></g><path d="M72 215.7 L89 212.7 L92 214.7 L92 226.7 L75 228.2 L72 225.7 Z" fill="#23262d"/><path d="M75 216.2 L89 214.2 L89.5 220.7 L75.5 222.2 Z" fill="#e8e8e8"/><g stroke="#d8d8d8" stroke-width="0.7"><line x1="92" y1="216.7" x2="108" y2="216.2"/><line x1="92" y1="220.2" x2="108" y2="219.7"/><line x1="92" y1="223.7" x2="108" y2="223.2"/></g></svg><div class="card" style="left:510px;top:203px"></div><div class="abs" style="left:510px;top:215px;width:154px;text-align:center;font-size:15.5px;line-height:20px;color:#333;white-space:nowrap"><span style="color:#888">10cm</span>土壤温度</div><svg class="abs" style="left:566.5px;top:242px" width="41" height="49" viewBox="0 0 41 49">
<g fill="none" stroke="#006400" stroke-width="3.6" stroke-linecap="round">
<path d="M12.2 25.2 V10 A7.8 7.8 0 0 1 27.8 10 V25.2 A12 12 0 1 1 12.2 25.2 Z"/>
<line x1="20" y1="9.5" x2="20" y2="31" stroke-width="3.2"/>
<line x1="1.8" y1="8.4" x2="6" y2="8.4"/><line x1="1.8" y1="16.3" x2="6" y2="16.3"/><line x1="2" y1="24.2" x2="4.8" y2="24.2"/>
<line x1="34.2" y1="8.4" x2="38.4" y2="8.4"/><line x1="34.2" y1="16.3" x2="38.4" y2="16.3"/><line x1="35.6" y1="24.2" x2="38.4" y2="24.2"/>
</g>
<g fill="#006400"><circle cx="20" cy="34.3" r="4.3"/><circle cx="2.2" cy="32.1" r="1.8"/><circle cx="2.2" cy="40.3" r="1.8"/><circle cx="38.2" cy="32.1" r="1.8"/><circle cx="38.2" cy="40.3" r="1.8"/></g>
</svg><div class="abs" style="left:510px;top:301px;width:154px;text-align:center;font-size:22px;line-height:26px;color:#555;white-space:nowrap">-20℃</div><div class="card" style="left:725px;top:203px"></div><div class="abs" style="left:725px;top:215px;width:154px;text-align:center;font-size:15.5px;line-height:20px;color:#333;white-space:nowrap"><span style="color:#888">20cm</span>土壤温度</div><svg class="abs" style="left:781.5px;top:242px" width="41" height="49" viewBox="0 0 41 49">
<g fill="none" stroke="#006400" stroke-width="3.6" stroke-linecap="round">
<path d="M12.2 25.2 V10 A7.8 7.8 0 0 1 27.8 10 V25.2 A12 12 0 1 1 12.2 25.2 Z"/>
<line x1="20" y1="9.5" x2="20" y2="31" stroke-width="3.2"/>
<line x1="1.8" y1="8.4" x2="6" y2="8.4"/><line x1="1.8" y1="16.3" x2="6" y2="16.3"/><line x1="2" y1="24.2" x2="4.8" y2="24.2"/>
<line x1="34.2" y1="8.4" x2="38.4" y2="8.4"/><line x1="34.2" y1="16.3" x2="38.4" y2="16.3"/><line x1="35.6" y1="24.2" x2="38.4" y2="24.2"/>
</g>
<g fill="#006400"><circle cx="20" cy="34.3" r="4.3"/><circle cx="2.2" cy="32.1" r="1.8"/><circle cx="2.2" cy="40.3" r="1.8"/><circle cx="38.2" cy="32.1" r="1.8"/><circle cx="38.2" cy="40.3" r="1.8"/></g>
</svg><div class="abs" style="left:725px;top:301px;width:154px;text-align:center;font-size:22px;line-height:26px;color:#555;white-space:nowrap">25.6℃</div><div class="card" style="left:941px;top:203px"></div><div class="abs" style="left:941px;top:215px;width:154px;text-align:center;font-size:15.5px;line-height:20px;color:#333;white-space:nowrap"><span style="color:#888">40cm</span>土壤温度</div><svg class="abs" style="left:997.5px;top:242px" width="41" height="49" viewBox="0 0 41 49">
<g fill="none" stroke="#006400" stroke-width="3.6" stroke-linecap="round">
<path d="M12.2 25.2 V10 A7.8 7.8 0 0 1 27.8 10 V25.2 A12 12 0 1 1 12.2 25.2 Z"/>
<line x1="20" y1="9.5" x2="20" y2="31" stroke-width="3.2"/>
<line x1="1.8" y1="8.4" x2="6" y2="8.4"/><line x1="1.8" y1="16.3" x2="6" y2="16.3"/><line x1="2" y1="24.2" x2="4.8" y2="24.2"/>
<line x1="34.2" y1="8.4" x2="38.4" y2="8.4"/><line x1="34.2" y1="16.3" x2="38.4" y2="16.3"/><line x1="35.6" y1="24.2" x2="38.4" y2="24.2"/>
</g>
<g fill="#006400"><circle cx="20" cy="34.3" r="4.3"/><circle cx="2.2" cy="32.1" r="1.8"/><circle cx="2.2" cy="40.3" r="1.8"/><circle cx="38.2" cy="32.1" r="1.8"/><circle cx="38.2" cy="40.3" r="1.8"/></g>
</svg><div class="abs" style="left:941px;top:301px;width:154px;text-align:center;font-size:22px;line-height:26px;color:#555;white-space:nowrap">21.2℃</div><div class="card" style="left:510px;top:344px"></div><div class="abs" style="left:510px;top:356px;width:154px;text-align:center;font-size:15.5px;line-height:20px;color:#333;white-space:nowrap"><span style="color:#888">10cm</span>土壤湿度</div><svg class="abs" style="left:566px;top:389px" width="41" height="38" viewBox="0 0 41 38">
<g fill="none" stroke="#006400" stroke-width="3.6" stroke-linecap="round">
<path d="M20 2 C15 8 8.3 15 8.3 22.5 A11.7 11.7 0 0 0 31.7 22.5 C31.7 15 25 8 20 2 Z" stroke-linejoin="round"/>
<path d="M19 27.2 C21.5 27 24.2 25.5 24.8 23.3"/>
<line x1="1.8" y1="2.8" x2="7" y2="2.8"/><line x1="1.8" y1="10.6" x2="5" y2="10.6"/><line x1="1.8" y1="34.7" x2="5" y2="34.7"/>
<line x1="33.5" y1="2.8" x2="38.4" y2="2.8"/><line x1="35.2" y1="10.6" x2="38.4" y2="10.6"/><line x1="35.2" y1="34.7" x2="38.4" y2="34.7"/>
</g>
<g fill="#006400"><circle cx="2" cy="18.5" r="1.8"/><circle cx="2" cy="26.4" r="1.8"/><circle cx="38.3" cy="18.5" r="1.8"/><circle cx="38.3" cy="26.4" r="1.8"/></g>
</svg><div class="abs" style="left:510px;top:443px;width:154px;text-align:center;font-size:22px;line-height:26px;color:#555;white-space:nowrap">0%</div><div class="card" style="left:725px;top:344px"></div><div class="abs" style="left:725px;top:356px;width:154px;text-align:center;font-size:15.5px;line-height:20px;color:#333;white-space:nowrap"><span style="color:#888">20cm</span>土壤湿度</div><svg class="abs" style="left:781px;top:389px" width="41" height="38" viewBox="0 0 41 38">
<g fill="none" stroke="#006400" stroke-width="3.6" stroke-linecap="round">
<path d="M20 2 C15 8 8.3 15 8.3 22.5 A11.7 11.7 0 0 0 31.7 22.5 C31.7 15 25 8 20 2 Z" stroke-linejoin="round"/>
<path d="M19 27.2 C21.5 27 24.2 25.5 24.8 23.3"/>
<line x1="1.8" y1="2.8" x2="7" y2="2.8"/><line x1="1.8" y1="10.6" x2="5" y2="10.6"/><line x1="1.8" y1="34.7" x2="5" y2="34.7"/>
<line x1="33.5" y1="2.8" x2="38.4" y2="2.8"/><line x1="35.2" y1="10.6" x2="38.4" y2="10.6"/><line x1="35.2" y1="34.7" x2="38.4" y2="34.7"/>
</g>
<g fill="#006400"><circle cx="2" cy="18.5" r="1.8"/><circle cx="2" cy="26.4" r="1.8"/><circle cx="38.3" cy="18.5" r="1.8"/><circle cx="38.3" cy="26.4" r="1.8"/></g>
</svg><div class="abs" style="left:725px;top:443px;width:154px;text-align:center;font-size:22px;line-height:26px;color:#555;white-space:nowrap">24%</div><div class="card" style="left:941px;top:344px"></div><div class="abs" style="left:941px;top:356px;width:154px;text-align:center;font-size:15.5px;line-height:20px;color:#333;white-space:nowrap"><span style="color:#888">40cm</span>土壤湿度</div><svg class="abs" style="left:997px;top:389px" width="41" height="38" viewBox="0 0 41 38">
<g fill="none" stroke="#006400" stroke-width="3.6" stroke-linecap="round">
<path d="M20 2 C15 8 8.3 15 8.3 22.5 A11.7 11.7 0 0 0 31.7 22.5 C31.7 15 25 8 20 2 Z" stroke-linejoin="round"/>
<path d="M19 27.2 C21.5 27 24.2 25.5 24.8 23.3"/>
<line x1="1.8" y1="2.8" x2="7" y2="2.8"/><line x1="1.8" y1="10.6" x2="5" y2="10.6"/><line x1="1.8" y1="34.7" x2="5" y2="34.7"/>
<line x1="33.5" y1="2.8" x2="38.4" y2="2.8"/><line x1="35.2" y1="10.6" x2="38.4" y2="10.6"/><line x1="35.2" y1="34.7" x2="38.4" y2="34.7"/>
</g>
<g fill="#006400"><circle cx="2" cy="18.5" r="1.8"/><circle cx="2" cy="26.4" r="1.8"/><circle cx="38.3" cy="18.5" r="1.8"/><circle cx="38.3" cy="26.4" r="1.8"/></g>
</svg><div class="abs" style="left:941px;top:443px;width:154px;text-align:center;font-size:22px;line-height:26px;color:#555;white-space:nowrap">48%</div><div class="panel" style="left:1133px;top:154px;width:841px;height:334px"></div><div class="ptitle" style="left:1146px;top:159px">历史数据</div><div class="divl" style="left:1146px;top:194px;width:814px"></div><div class="abs" style="left:1146px;top:203px;width:814px;height:32px;background:#fff"></div><div class="abs" style="left:1146px;top:235px;width:814px;height:53px;background:#f9f9f9"></div><div class="abs" style="left:1146px;top:288px;width:814px;height:53px;background:#fff"></div><div class="abs" style="left:1146px;top:203px;width:1px;height:139px;background:#ddd"></div><div class="abs" style="left:1225px;top:203px;width:1px;height:139px;background:#ddd"></div><div class="abs" style="left:1349px;top:203px;width:1px;height:139px;background:#ddd"></div><div class="abs" style="left:1470px;top:203px;width:1px;height:139px;background:#ddd"></div><div class="abs" style="left:1594px;top:203px;width:1px;height:139px;background:#ddd"></div><div class="abs" style="left:1714px;top:203px;width:1px;height:139px;background:#ddd"></div><div class="abs" style="left:1837px;top:203px;width:1px;height:139px;background:#ddd"></div><div class="abs" style="left:1960px;top:203px;width:1px;height:139px;background:#ddd"></div><div class="abs" style="left:1146px;top:203px;width:815px;height:1px;background:#ddd"></div><div class="abs" style="left:1146px;top:235px;width:815px;height:1px;background:#ddd"></div><div class="abs" style="left:1146px;top:288px;width:815px;height:1px;background:#ddd"></div><div class="abs" style="left:1146px;top:341px;width:815px;height:1px;background:#ddd"></div><div class="cell" style="left:1146px;top:210px;width:79px;font-weight:bold;color:#333;font-size:13px">日期</div><div class="cell" style="left:1225px;top:210px;width:124px;font-weight:bold;color:#333;font-size:13px">10cm土壤温度(℃)</div><div class="cell" style="left:1349px;top:210px;width:121px;font-weight:bold;color:#333;font-size:13px">10cm土壤湿度(%)</div><div class="cell" style="left:1470px;top:210px;width:124px;font-weight:bold;color:#333;font-size:13px">20cm土壤温度(℃)</div><div class="cell" style="left:1594px;top:210px;width:120px;font-weight:bold;color:#333;font-size:13px">20cm土壤湿度(%)</div><div class="cell" style="left:1714px;top:210px;width:123px;font-weight:bold;color:#333;font-size:13px">40cm土壤温度(℃)</div><div class="cell" style="left:1837px;top:210px;width:123px;font-weight:bold;color:#333;font-size:13px">40cm土壤湿度(%)</div><div class="cell" style="left:1146px;top:241px;width:79px">2018-06-<br>26</div><div class="cell" style="left:1225px;top:241px;width:124px">-15.56</div><div class="cell" style="left:1349px;top:241px;width:121px">0.06</div><div class="cell" style="left:1470px;top:241px;width:124px">25.71</div><div class="cell" style="left:1594px;top:241px;width:120px">23.89</div><div class="cell" style="left:1714px;top:241px;width:123px">21.82</div><div class="cell" style="left:1837px;top:241px;width:123px">25.72</div><div class="cell" style="left:1146px;top:294px;width:79px">2018-06-<br>25</div><div class="cell" style="left:1225px;top:294px;width:124px">-20</div><div class="cell" style="left:1349px;top:294px;width:121px">0</div><div class="cell" style="left:1470px;top:294px;width:124px">26.6</div><div class="cell" style="left:1594px;top:294px;width:120px">23.6</div><div class="cell" style="left:1714px;top:294px;width:123px">22.82</div><div class="cell" style="left:1837px;top:294px;width:123px">9.2</div><div class="panel" style="left:282px;top:496px;width:1692px;height:376px"></div><div class="ptitle" style="left:297px;top:500px">图表数据</div><div class="divl" style="left:296px;top:536px;width:1664px"></div><div class="pill" style="left:1686px;top:501px;width:65px;height:30px;line-height:28px">折线图</div><div class="pill" style="left:1760px;top:501px;width:64px;height:30px;line-height:28px">柱状图</div><div class="pill" style="left:1834px;top:501px;width:126px;height:30px;line-height:28px;padding-right:18px">历史数据详情</div><svg class="abs" style="left:1933px;top:508px" width="15" height="15"><circle cx="7.5" cy="7.5" r="6" fill="none" stroke="#666" stroke-width="1.6"/><path d="M4 7.5 H10.5 M7.8 4.8 L10.5 7.5 L7.8 10.2" fill="none" stroke="#666" stroke-width="1.6"/></svg><svg class="abs" style="left:0;top:0" width="2001" height="972" viewBox="0 0 2001 972"><line x1="357.1" y1="589.2" x2="1077.7" y2="589.2" stroke="#e0e0e0" stroke-width="1"/><line x1="357.1" y1="653.5" x2="1077.7" y2="653.5" stroke="#e0e0e0" stroke-width="1"/><line x1="357.1" y1="717.9" x2="1077.7" y2="717.9" stroke="#e0e0e0" stroke-width="1"/><line x1="357.1" y1="846.6" x2="1077.7" y2="846.6" stroke="#e0e0e0" stroke-width="1"/><defs><linearGradient id="g357_0" gradientUnits="userSpaceOnUse" x1="0" y1="589.2" x2="0" y2="846.6"><stop offset="0" stop-color="#c23531" stop-opacity="0.57"/><stop offset="0.7" stop-color="#c23531" stop-opacity="0.25"/><stop offset="1" stop-color="#c23531" stop-opacity="0.23"/></linearGradient></defs><path d="M372.77 846.55 C372.77 846.55 388.43 846.55 404.10 846.55 C419.76 846.55 419.76 846.55 435.43 846.55 C451.09 846.55 451.09 846.55 466.76 846.55 C482.42 846.55 482.42 846.55 498.09 846.55 C513.75 846.55 526.04 846.55 529.42 846.55 C557.37 731.72 545.08 589.15 560.75 589.15 C576.41 589.15 564.13 731.72 592.08 846.55 C595.46 846.55 607.74 846.55 623.41 846.55 C639.07 846.55 639.07 846.55 654.74 846.55 C670.40 846.55 670.40 846.55 686.07 846.55 C701.73 846.55 701.73 846.55 717.40 846.55 C733.07 846.55 733.07 846.55 748.73 846.55 C764.40 846.55 764.40 846.55 780.06 846.55 C795.73 846.55 795.73 846.55 811.39 846.55 C827.06 846.55 827.06 846.55 842.72 846.55 C858.39 846.55 858.39 846.55 874.05 846.55 C889.72 846.55 889.72 846.55 905.38 846.55 C921.05 846.55 921.05 846.55 936.71 846.55 C952.38 846.55 952.38 846.55 968.04 846.55 C983.71 846.55 983.71 846.55 999.37 846.55 C1015.04 846.55 1015.04 846.55 1030.70 846.55 C1046.37 846.55 1062.03 846.55 1062.03 846.55 L1062.03 782.20 L372.77 782.20 Z" fill="url(#g357_0)"/><defs><linearGradient id="g357_1" gradientUnits="userSpaceOnUse" x1="0" y1="690.8" x2="0" y2="782.2"><stop offset="0" stop-color="#2f4554" stop-opacity="0.62"/><stop offset="1" stop-color="#2f4554" stop-opacity="0.15"/></linearGradient></defs><path d="M372.77 690.82 C372.77 690.82 388.72 690.82 404.10 690.82 C420.05 693.04 419.48 696.89 435.43 699.51 C450.81 701.12 451.09 701.04 466.76 701.12 C482.42 701.12 482.45 700.88 498.09 699.83 C513.78 698.78 513.72 697.82 529.42 696.94 C545.05 696.05 545.08 696.29 560.75 696.29 C576.41 696.29 576.44 696.05 592.08 696.94 C607.78 697.82 607.71 699.11 623.41 699.83 C639.04 700.55 639.07 699.83 654.74 699.83 C670.40 699.83 670.40 699.83 686.07 699.83 C701.73 699.83 701.73 699.83 717.40 699.83 C733.07 699.83 733.07 699.83 748.73 699.83 C764.40 699.83 764.40 699.83 780.06 699.83 C795.73 699.83 795.73 699.83 811.39 699.83 C827.06 699.83 827.06 699.83 842.72 699.83 C858.39 699.83 858.39 699.83 874.05 699.83 C889.72 699.83 889.72 699.83 905.38 699.83 C921.05 699.83 921.05 699.83 936.71 699.83 C952.38 699.83 952.38 699.83 968.04 699.83 C983.71 699.83 983.71 699.83 999.37 699.83 C1015.04 699.83 1015.04 699.83 1030.70 699.83 C1046.37 699.83 1062.03 699.83 1062.03 699.83 L1062.03 782.20 L372.77 782.20 Z" fill="url(#g357_1)"/><defs><linearGradient id="g357_2" gradientUnits="userSpaceOnUse" x1="0" y1="708.2" x2="0" y2="782.2"><stop offset="0" stop-color="#61a0a8" stop-opacity="0.62"/><stop offset="1" stop-color="#61a0a8" stop-opacity="0.3"/></linearGradient></defs><path d="M372.77 709.48 C372.77 709.48 388.43 709.32 404.10 709.16 C419.76 709.00 419.76 709.00 435.43 708.84 C451.09 708.68 451.09 708.68 466.76 708.52 C482.42 708.36 482.42 708.20 498.09 708.20 C513.75 708.28 513.75 708.52 529.42 708.84 C545.08 709.16 545.08 709.24 560.75 709.48 C576.41 709.73 576.41 709.81 592.08 709.81 C607.74 709.81 607.74 709.56 623.41 709.48 C639.07 709.40 639.07 709.48 654.74 709.48 C670.40 709.48 670.40 709.40 686.07 709.48 C701.74 709.56 701.76 709.08 717.40 709.81 C733.09 710.53 733.04 711.74 748.73 712.38 C764.37 713.02 764.40 712.38 780.06 712.38 C795.73 712.38 795.73 712.38 811.39 712.38 C827.06 712.38 827.06 712.38 842.72 712.38 C858.39 712.38 858.39 712.38 874.05 712.38 C889.72 712.38 889.72 712.38 905.38 712.38 C921.05 712.38 921.05 712.38 936.71 712.38 C952.38 712.38 952.38 712.30 968.04 712.38 C983.71 712.46 983.71 712.50 999.37 712.70 C1015.04 712.90 1015.04 712.94 1030.70 713.18 C1046.37 713.43 1062.03 713.67 1062.03 713.67 L1062.03 782.20 L372.77 782.20 Z" fill="url(#g357_2)"/><path d="M372.77 690.82 C372.77 690.82 388.72 690.82 404.10 690.82 C420.05 693.04 419.48 696.89 435.43 699.51 C450.81 701.12 451.09 701.04 466.76 701.12 C482.42 701.12 482.45 700.88 498.09 699.83 C513.78 698.78 513.72 697.82 529.42 696.94 C545.05 696.05 545.08 696.29 560.75 696.29 C576.41 696.29 576.44 696.05 592.08 696.94 C607.78 697.82 607.71 699.11 623.41 699.83 C639.04 700.55 639.07 699.83 654.74 699.83 C670.40 699.83 670.40 699.83 686.07 699.83 C701.73 699.83 701.73 699.83 717.40 699.83 C733.07 699.83 733.07 699.83 748.73 699.83 C764.40 699.83 764.40 699.83 780.06 699.83 C795.73 699.83 795.73 699.83 811.39 699.83 C827.06 699.83 827.06 699.83 842.72 699.83 C858.39 699.83 858.39 699.83 874.05 699.83 C889.72 699.83 889.72 699.83 905.38 699.83 C921.05 699.83 921.05 699.83 936.71 699.83 C952.38 699.83 952.38 699.83 968.04 699.83 C983.71 699.83 983.71 699.83 999.37 699.83 C1015.04 699.83 1015.04 699.83 1030.70 699.83 C1046.37 699.83 1062.03 699.83 1062.03 699.83" fill="none" stroke="#2f4554" stroke-width="2"/><path d="M372.77 709.48 C372.77 709.48 388.43 709.32 404.10 709.16 C419.76 709.00 419.76 709.00 435.43 708.84 C451.09 708.68 451.09 708.68 466.76 708.52 C482.42 708.36 482.42 708.20 498.09 708.20 C513.75 708.28 513.75 708.52 529.42 708.84 C545.08 709.16 545.08 709.24 560.75 709.48 C576.41 709.73 576.41 709.81 592.08 709.81 C607.74 709.81 607.74 709.56 623.41 709.48 C639.07 709.40 639.07 709.48 654.74 709.48 C670.40 709.48 670.40 709.40 686.07 709.48 C701.74 709.56 701.76 709.08 717.40 709.81 C733.09 710.53 733.04 711.74 748.73 712.38 C764.37 713.02 764.40 712.38 780.06 712.38 C795.73 712.38 795.73 712.38 811.39 712.38 C827.06 712.38 827.06 712.38 842.72 712.38 C858.39 712.38 858.39 712.38 874.05 712.38 C889.72 712.38 889.72 712.38 905.38 712.38 C921.05 712.38 921.05 712.38 936.71 712.38 C952.38 712.38 952.38 712.30 968.04 712.38 C983.71 712.46 983.71 712.50 999.37 712.70 C1015.04 712.90 1015.04 712.94 1030.70 713.18 C1046.37 713.43 1062.03 713.67 1062.03 713.67" fill="none" stroke="#61a0a8" stroke-width="2"/><line x1="352.1" y1="782.2" x2="1077.7" y2="782.2" stroke="#333" stroke-width="1.3"/><line x1="357.1" y1="589.2" x2="357.1" y2="846.6" stroke="#333" stroke-width="1.3"/><line x1="352.1" y1="589.2" x2="357.1" y2="589.2" stroke="#333" stroke-width="1.3"/><text x="348.1" y="593.4" text-anchor="end" font-size="14" fill="#444" font-family="Liberation Sans, sans-serif">60</text><line x1="352.1" y1="653.5" x2="357.1" y2="653.5" stroke="#333" stroke-width="1.3"/><text x="348.1" y="657.7" text-anchor="end" font-size="14" fill="#444" font-family="Liberation Sans, sans-serif">40</text><line x1="352.1" y1="717.9" x2="357.1" y2="717.9" stroke="#333" stroke-width="1.3"/><text x="348.1" y="722.1" text-anchor="end" font-size="14" fill="#444" font-family="Liberation Sans, sans-serif">20</text><line x1="352.1" y1="782.2" x2="357.1" y2="782.2" stroke="#333" stroke-width="1.3"/><text x="348.1" y="786.4" text-anchor="end" font-size="14" fill="#444" font-family="Liberation Sans, sans-serif">0</text><line x1="352.1" y1="846.6" x2="357.1" y2="846.6" stroke="#333" stroke-width="1.3"/><text x="348.1" y="850.8" text-anchor="end" font-size="14" fill="#444" font-family="Liberation Sans, sans-serif">-20</text><line x1="357.1" y1="782.2" x2="357.1" y2="787.2" stroke="#333" stroke-width="1.3"/><line x1="482.4" y1="782.2" x2="482.4" y2="787.2" stroke="#333" stroke-width="1.3"/><line x1="607.7" y1="782.2" x2="607.7" y2="787.2" stroke="#333" stroke-width="1.3"/><line x1="733.1" y1="782.2" x2="733.1" y2="787.2" stroke="#333" stroke-width="1.3"/><line x1="858.4" y1="782.2" x2="858.4" y2="787.2" stroke="#333" stroke-width="1.3"/><line x1="983.7" y1="782.2" x2="983.7" y2="787.2" stroke="#333" stroke-width="1.3"/><path d="M372.77 846.55 C372.77 846.55 388.43 846.55 404.10 846.55 C419.76 846.55 419.76 846.55 435.43 846.55 C451.09 846.55 451.09 846.55 466.76 846.55 C482.42 846.55 482.42 846.55 498.09 846.55 C513.75 846.55 526.04 846.55 529.42 846.55 C557.37 731.72 545.08 589.15 560.75 589.15 C576.41 589.15 564.13 731.72 592.08 846.55 C595.46 846.55 607.74 846.55 623.41 846.55 C639.07 846.55 639.07 846.55 654.74 846.55 C670.40 846.55 670.40 846.55 686.07 846.55 C701.73 846.55 701.73 846.55 717.40 846.55 C733.07 846.55 733.07 846.55 748.73 846.55 C764.40 846.55 764.40 846.55 780.06 846.55 C795.73 846.55 795.73 846.55 811.39 846.55 C827.06 846.55 827.06 846.55 842.72 846.55 C858.39 846.55 858.39 846.55 874.05 846.55 C889.72 846.55 889.72 846.55 905.38 846.55 C921.05 846.55 921.05 846.55 936.71 846.55 C952.38 846.55 952.38 846.55 968.04 846.55 C983.71 846.55 983.71 846.55 999.37 846.55 C1015.04 846.55 1015.04 846.55 1030.70 846.55 C1046.37 846.55 1062.03 846.55 1062.03 846.55" fill="none" stroke="#c23531" stroke-width="2"/><circle cx="372.77" cy="846.55" r="2.2" fill="#fff" stroke="#c23531" stroke-width="1.3"/><circle cx="498.09" cy="846.55" r="2.2" fill="#fff" stroke="#c23531" stroke-width="1.3"/><circle cx="623.41" cy="846.55" r="2.2" fill="#fff" stroke="#c23531" stroke-width="1.3"/><circle cx="748.73" cy="846.55" r="2.2" fill="#fff" stroke="#c23531" stroke-width="1.3"/><circle cx="874.05" cy="846.55" r="2.2" fill="#fff" stroke="#c23531" stroke-width="1.3"/><circle cx="999.37" cy="846.55" r="2.2" fill="#fff" stroke="#c23531" stroke-width="1.3"/><circle cx="372.77" cy="690.82" r="2.2" fill="#fff" stroke="#2f4554" stroke-width="1.3"/><circle cx="498.09" cy="699.83" r="2.2" fill="#fff" stroke="#2f4554" stroke-width="1.3"/><circle cx="623.41" cy="699.83" r="2.2" fill="#fff" stroke="#2f4554" stroke-width="1.3"/><circle cx="748.73" cy="699.83" r="2.2" fill="#fff" stroke="#2f4554" stroke-width="1.3"/><circle cx="874.05" cy="699.83" r="2.2" fill="#fff" stroke="#2f4554" stroke-width="1.3"/><circle cx="999.37" cy="699.83" r="2.2" fill="#fff" stroke="#2f4554" stroke-width="1.3"/><circle cx="372.77" cy="709.48" r="2.2" fill="#fff" stroke="#61a0a8" stroke-width="1.3"/><circle cx="498.09" cy="708.20" r="2.2" fill="#fff" stroke="#61a0a8" stroke-width="1.3"/><circle cx="623.41" cy="709.48" r="2.2" fill="#fff" stroke="#61a0a8" stroke-width="1.3"/><circle cx="748.73" cy="712.38" r="2.2" fill="#fff" stroke="#61a0a8" stroke-width="1.3"/><circle cx="874.05" cy="712.38" r="2.2" fill="#fff" stroke="#61a0a8" stroke-width="1.3"/><circle cx="999.37" cy="712.70" r="2.2" fill="#fff" stroke="#61a0a8" stroke-width="1.3"/><line x1="717.4" y1="589" x2="717.4" y2="846.3" stroke="#bbb" stroke-width="1"/><circle cx="717.40" cy="846.55" r="5" fill="#fff" stroke="#c23531" stroke-width="1.8"/><circle cx="717.40" cy="699.83" r="5" fill="#fff" stroke="#2f4554" stroke-width="1.8"/><circle cx="717.40" cy="709.81" r="5" fill="#fff" stroke="#61a0a8" stroke-width="1.8"/><rect x="359" y="827.6" width="721" height="32.8" fill="rgba(167,183,204,0.4)"/><path d="M360 854.3 L523 854.3 L556.6 833.5 L589.5 854.3 L1079 854.3 L1079 860.4 L360 860.4 Z" fill="rgba(47,69,84,0.06)" stroke="rgba(47,69,84,0.22)" stroke-width="0.6"/><rect x="359" y="827.6" width="2" height="32.8" fill="#a7b7cc"/><rect x="356" y="837" width="8" height="14" rx="1" fill="#a7b7cc"/><line x1="358" y1="841.5" x2="362" y2="841.5" stroke="#fff" stroke-width="1"/><line x1="358" y1="846.5" x2="362" y2="846.5" stroke="#fff" stroke-width="1"/><rect x="1078" y="827.6" width="2" height="32.8" fill="#a7b7cc"/><rect x="1075" y="837" width="8" height="14" rx="1" fill="#a7b7cc"/><line x1="1077" y1="841.5" x2="1081" y2="841.5" stroke="#fff" stroke-width="1"/><line x1="1077" y1="846.5" x2="1081" y2="846.5" stroke="#fff" stroke-width="1"/><text x="312" y="570" font-size="13" fill="#333" font-family="Liberation Sans, sans-serif">土壤温度 ( °C )</text><text x="1093" y="787" font-size="13" fill="#333" font-family="Liberation Sans, sans-serif">时间</text><text x="372.8" y="867.5" text-anchor="middle" font-size="14" fill="#444" font-family="Liberation Sans, sans-serif">18-6-25 17:55</text><text x="498.1" y="867.5" text-anchor="middle" font-size="14" fill="#444" font-family="Liberation Sans, sans-serif">18-6-25 23:24</text><text x="623.4" y="867.5" text-anchor="middle" font-size="14" fill="#444" font-family="Liberation Sans, sans-serif">18-6-26 03:31</text><text x="748.7" y="867.5" text-anchor="middle" font-size="14" fill="#444" font-family="Liberation Sans, sans-serif">18-6-26 06:48</text><text x="874.1" y="867.5" text-anchor="middle" font-size="14" fill="#444" font-family="Liberation Sans, sans-serif">18-6-26 12:07</text><text x="999.4" y="867.5" text-anchor="middle" font-size="14" fill="#444" font-family="Liberation Sans, sans-serif">18-6-26 15:47</text><line x1="1151.7" y1="588.8" x2="1877.8" y2="588.8" stroke="#e0e0e0" stroke-width="1"/><line x1="1151.7" y1="640.3" x2="1877.8" y2="640.3" stroke="#e0e0e0" stroke-width="1"/><line x1="1151.7" y1="691.8" x2="1877.8" y2="691.8" stroke="#e0e0e0" stroke-width="1"/><line x1="1151.7" y1="743.3" x2="1877.8" y2="743.3" stroke="#e0e0e0" stroke-width="1"/><line x1="1151.7" y1="794.8" x2="1877.8" y2="794.8" stroke="#e0e0e0" stroke-width="1"/><defs><linearGradient id="g1151_0" gradientUnits="userSpaceOnUse" x1="0" y1="840.1" x2="0" y2="846.3"><stop offset="0" stop-color="#d48265" stop-opacity="0.5"/><stop offset="1" stop-color="#d48265" stop-opacity="0.2"/></linearGradient></defs><path d="M1167.48 846.30 C1167.48 846.30 1183.27 846.30 1199.05 846.30 C1214.84 846.30 1214.84 846.30 1230.62 846.30 C1246.41 846.30 1246.41 846.30 1262.19 846.30 C1277.98 846.30 1277.98 846.30 1293.76 846.30 C1309.55 846.30 1309.55 846.30 1325.33 846.30 C1341.12 846.30 1341.12 846.30 1356.90 846.30 C1372.69 846.30 1372.69 846.30 1388.47 846.30 C1404.26 846.30 1404.26 846.30 1420.04 846.30 C1435.83 846.30 1435.83 846.30 1451.61 846.30 C1467.40 846.30 1467.40 846.30 1483.18 846.30 C1498.97 846.30 1498.97 846.30 1514.75 846.30 C1530.53 846.30 1530.68 846.30 1546.32 846.30 C1562.25 844.74 1562.10 840.12 1577.89 840.12 C1593.67 840.12 1593.53 844.74 1609.46 846.30 C1625.10 846.30 1625.24 846.30 1641.03 846.30 C1656.81 846.30 1656.81 846.30 1672.60 846.30 C1688.38 846.30 1688.38 846.30 1704.17 846.30 C1719.95 846.30 1719.95 846.30 1735.74 846.30 C1751.52 846.30 1751.52 846.30 1767.31 846.30 C1783.09 846.30 1783.09 846.30 1798.88 846.30 C1814.66 846.30 1814.66 846.30 1830.45 846.30 C1846.23 846.30 1862.02 846.30 1862.02 846.30 L1862.02 846.30 L1167.48 846.30 Z" fill="url(#g1151_0)"/><defs><linearGradient id="g1151_1" gradientUnits="userSpaceOnUse" x1="0" y1="717.5" x2="0" y2="846.3"><stop offset="0" stop-color="#91c7ae" stop-opacity="0.6"/><stop offset="1" stop-color="#91c7ae" stop-opacity="0.2"/></linearGradient></defs><path d="M1167.48 722.70 C1167.48 722.70 1183.27 722.70 1199.05 722.70 C1214.84 722.70 1214.92 721.55 1230.62 722.70 C1246.49 723.86 1246.32 726.17 1262.19 727.33 C1277.89 727.33 1278.06 727.33 1293.76 727.33 C1309.63 726.17 1309.46 723.86 1325.33 722.70 C1341.03 721.55 1341.12 722.70 1356.90 722.70 C1372.69 722.70 1372.69 722.70 1388.47 722.70 C1404.26 722.70 1404.26 722.70 1420.04 722.70 C1435.83 722.70 1435.91 721.55 1451.61 722.70 C1467.48 723.86 1467.40 727.33 1483.18 727.33 C1498.97 727.33 1498.88 723.86 1514.75 722.70 C1530.45 721.55 1530.64 723.98 1546.32 722.70 C1562.21 721.40 1562.36 717.55 1577.89 717.55 C1593.93 718.73 1593.40 726.02 1609.46 727.33 C1624.97 727.33 1625.16 723.86 1641.03 722.70 C1656.73 721.55 1656.82 722.44 1672.60 722.70 C1688.39 722.96 1688.40 722.83 1704.17 723.73 C1719.97 724.63 1719.98 726.56 1735.74 726.30 C1751.55 726.05 1751.47 723.60 1767.31 722.70 C1783.04 721.80 1783.09 722.70 1798.88 722.70 C1814.66 722.70 1814.66 722.70 1830.45 722.70 C1846.23 722.70 1862.02 722.70 1862.02 722.70 L1862.02 846.30 L1167.48 846.30 Z" fill="url(#g1151_1)"/><defs><linearGradient id="g1151_2" gradientUnits="userSpaceOnUse" x1="0" y1="593.4" x2="0" y2="846.3"><stop offset="0" stop-color="#749f83" stop-opacity="0.6"/><stop offset="1" stop-color="#749f83" stop-opacity="0.25"/></linearGradient></defs><path d="M1167.48 846.30 C1167.48 846.30 1183.27 830.08 1199.05 813.85 C1214.84 797.63 1212.28 793.23 1230.62 781.41 C1243.85 772.89 1246.15 775.00 1262.19 773.17 C1277.72 771.40 1278.10 775.35 1293.76 774.20 C1309.67 773.03 1309.53 771.24 1325.33 768.53 C1341.10 765.83 1341.01 764.55 1356.90 763.38 C1372.58 762.23 1372.81 765.18 1388.47 763.90 C1404.38 762.60 1404.22 760.82 1420.04 758.23 C1435.79 755.67 1435.74 754.76 1451.61 753.60 C1467.31 752.45 1467.52 755.01 1483.18 753.60 C1499.09 752.17 1498.84 749.36 1514.75 747.93 C1530.41 746.53 1530.53 747.93 1546.32 747.93 C1562.10 747.93 1562.19 749.09 1577.89 747.93 C1593.76 746.77 1594.07 747.19 1609.46 743.30 C1625.64 739.21 1624.77 734.89 1641.03 731.97 C1656.34 729.22 1656.94 733.38 1672.60 731.97 C1688.51 730.54 1688.86 730.80 1704.17 726.30 C1720.43 721.53 1728.76 727.66 1735.74 713.43 C1760.33 663.29 1742.35 644.98 1767.31 597.55 C1773.92 593.43 1783.13 593.43 1798.88 593.43 C1814.70 593.69 1814.56 597.29 1830.45 598.58 C1846.13 599.86 1862.02 598.58 1862.02 598.58 L1862.02 846.30 L1167.48 846.30 Z" fill="url(#g1151_2)"/><path d="M1167.48 722.70 C1167.48 722.70 1183.27 722.70 1199.05 722.70 C1214.84 722.70 1214.92 721.55 1230.62 722.70 C1246.49 723.86 1246.32 726.17 1262.19 727.33 C1277.89 727.33 1278.06 727.33 1293.76 727.33 C1309.63 726.17 1309.46 723.86 1325.33 722.70 C1341.03 721.55 1341.12 722.70 1356.90 722.70 C1372.69 722.70 1372.69 722.70 1388.47 722.70 C1404.26 722.70 1404.26 722.70 1420.04 722.70 C1435.83 722.70 1435.91 721.55 1451.61 722.70 C1467.48 723.86 1467.40 727.33 1483.18 727.33 C1498.97 727.33 1498.88 723.86 1514.75 722.70 C1530.45 721.55 1530.64 723.98 1546.32 722.70 C1562.21 721.40 1562.36 717.55 1577.89 717.55 C1593.93 718.73 1593.40 726.02 1609.46 727.33 C1624.97 727.33 1625.16 723.86 1641.03 722.70 C1656.73 721.55 1656.82 722.44 1672.60 722.70 C1688.39 722.96 1688.40 722.83 1704.17 723.73 C1719.97 724.63 1719.98 726.56 1735.74 726.30 C1751.55 726.05 1751.47 723.60 1767.31 722.70 C1783.04 721.80 1783.09 722.70 1798.88 722.70 C1814.66 722.70 1814.66 722.70 1830.45 722.70 C1846.23 722.70 1862.02 722.70 1862.02 722.70" fill="none" stroke="#91c7ae" stroke-width="2"/><path d="M1167.48 846.30 C1167.48 846.30 1183.27 830.08 1199.05 813.85 C1214.84 797.63 1212.28 793.23 1230.62 781.41 C1243.85 772.89 1246.15 775.00 1262.19 773.17 C1277.72 771.40 1278.10 775.35 1293.76 774.20 C1309.67 773.03 1309.53 771.24 1325.33 768.53 C1341.10 765.83 1341.01 764.55 1356.90 763.38 C1372.58 762.23 1372.81 765.18 1388.47 763.90 C1404.38 762.60 1404.22 760.82 1420.04 758.23 C1435.79 755.67 1435.74 754.76 1451.61 753.60 C1467.31 752.45 1467.52 755.01 1483.18 753.60 C1499.09 752.17 1498.84 749.36 1514.75 747.93 C1530.41 746.53 1530.53 747.93 1546.32 747.93 C1562.10 747.93 1562.19 749.09 1577.89 747.93 C1593.76 746.77 1594.07 747.19 1609.46 743.30 C1625.64 739.21 1624.77 734.89 1641.03 731.97 C1656.34 729.22 1656.94 733.38 1672.60 731.97 C1688.51 730.54 1688.86 730.80 1704.17 726.30 C1720.43 721.53 1728.76 727.66 1735.74 713.43 C1760.33 663.29 1742.35 644.98 1767.31 597.55 C1773.92 593.43 1783.13 593.43 1798.88 593.43 C1814.70 593.69 1814.56 597.29 1830.45 598.58 C1846.13 599.86 1862.02 598.58 1862.02 598.58" fill="none" stroke="#749f83" stroke-width="2"/><line x1="1146.7" y1="846.3" x2="1877.8" y2="846.3" stroke="#333" stroke-width="1.3"/><line x1="1151.7" y1="588.8" x2="1151.7" y2="846.3" stroke="#333" stroke-width="1.3"/><line x1="1146.7" y1="588.8" x2="1151.7" y2="588.8" stroke="#333" stroke-width="1.3"/><text x="1142.7" y="593.0" text-anchor="end" font-size="14" fill="#444" font-family="Liberation Sans, sans-serif">50</text><line x1="1146.7" y1="640.3" x2="1151.7" y2="640.3" stroke="#333" stroke-width="1.3"/><text x="1142.7" y="644.5" text-anchor="end" font-size="14" fill="#444" font-family="Liberation Sans, sans-serif">40</text><line x1="1146.7" y1="691.8" x2="1151.7" y2="691.8" stroke="#333" stroke-width="1.3"/><text x="1142.7" y="696.0" text-anchor="end" font-size="14" fill="#444" font-family="Liberation Sans, sans-serif">30</text><line x1="1146.7" y1="743.3" x2="1151.7" y2="743.3" stroke="#333" stroke-width="1.3"/><text x="1142.7" y="747.5" text-anchor="end" font-size="14" fill="#444" font-family="Liberation Sans, sans-serif">20</text><line x1="1146.7" y1="794.8" x2="1151.7" y2="794.8" stroke="#333" stroke-width="1.3"/><text x="1142.7" y="799.0" text-anchor="end" font-size="14" fill="#444" font-family="Liberation Sans, sans-serif">10</text><line x1="1146.7" y1="846.3" x2="1151.7" y2="846.3" stroke="#333" stroke-width="1.3"/><text x="1142.7" y="850.5" text-anchor="end" font-size="14" fill="#444" font-family="Liberation Sans, sans-serif">0</text><line x1="1151.7" y1="846.3" x2="1151.7" y2="851.3" stroke="#333" stroke-width="1.3"/><line x1="1278.0" y1="846.3" x2="1278.0" y2="851.3" stroke="#333" stroke-width="1.3"/><line x1="1404.3" y1="846.3" x2="1404.3" y2="851.3" stroke="#333" stroke-width="1.3"/><line x1="1530.5" y1="846.3" x2="1530.5" y2="851.3" stroke="#333" stroke-width="1.3"/><line x1="1656.8" y1="846.3" x2="1656.8" y2="851.3" stroke="#333" stroke-width="1.3"/><line x1="1783.1" y1="846.3" x2="1783.1" y2="851.3" stroke="#333" stroke-width="1.3"/><path d="M1167.48 846.30 C1167.48 846.30 1183.27 846.30 1199.05 846.30 C1214.84 846.30 1214.84 846.30 1230.62 846.30 C1246.41 846.30 1246.41 846.30 1262.19 846.30 C1277.98 846.30 1277.98 846.30 1293.76 846.30 C1309.55 846.30 1309.55 846.30 1325.33 846.30 C1341.12 846.30 1341.12 846.30 1356.90 846.30 C1372.69 846.30 1372.69 846.30 1388.47 846.30 C1404.26 846.30 1404.26 846.30 1420.04 846.30 C1435.83 846.30 1435.83 846.30 1451.61 846.30 C1467.40 846.30 1467.40 846.30 1483.18 846.30 C1498.97 846.30 1498.97 846.30 1514.75 846.30 C1530.53 846.30 1530.68 846.30 1546.32 846.30 C1562.25 844.74 1562.10 840.12 1577.89 840.12 C1593.67 840.12 1593.53 844.74 1609.46 846.30 C1625.10 846.30 1625.24 846.30 1641.03 846.30 C1656.81 846.30 1656.81 846.30 1672.60 846.30 C1688.38 846.30 1688.38 846.30 1704.17 846.30 C1719.95 846.30 1719.95 846.30 1735.74 846.30 C1751.52 846.30 1751.52 846.30 1767.31 846.30 C1783.09 846.30 1783.09 846.30 1798.88 846.30 C1814.66 846.30 1814.66 846.30 1830.45 846.30 C1846.23 846.30 1862.02 846.30 1862.02 846.30" fill="none" stroke="#d48265" stroke-width="2"/><circle cx="1167.48" cy="846.30" r="2.2" fill="#fff" stroke="#d48265" stroke-width="1.3"/><circle cx="1293.76" cy="846.30" r="2.2" fill="#fff" stroke="#d48265" stroke-width="1.3"/><circle cx="1420.04" cy="846.30" r="2.2" fill="#fff" stroke="#d48265" stroke-width="1.3"/><circle cx="1546.32" cy="846.30" r="2.2" fill="#fff" stroke="#d48265" stroke-width="1.3"/><circle cx="1672.60" cy="846.30" r="2.2" fill="#fff" stroke="#d48265" stroke-width="1.3"/><circle cx="1798.88" cy="846.30" r="2.2" fill="#fff" stroke="#d48265" stroke-width="1.3"/><circle cx="1167.48" cy="722.70" r="2.2" fill="#fff" stroke="#91c7ae" stroke-width="1.3"/><circle cx="1293.76" cy="727.33" r="2.2" fill="#fff" stroke="#91c7ae" stroke-width="1.3"/><circle cx="1420.04" cy="722.70" r="2.2" fill="#fff" stroke="#91c7ae" stroke-width="1.3"/><circle cx="1546.32" cy="722.70" r="2.2" fill="#fff" stroke="#91c7ae" stroke-width="1.3"/><circle cx="1672.60" cy="722.70" r="2.2" fill="#fff" stroke="#91c7ae" stroke-width="1.3"/><circle cx="1798.88" cy="722.70" r="2.2" fill="#fff" stroke="#91c7ae" stroke-width="1.3"/><circle cx="1167.48" cy="846.30" r="2.2" fill="#fff" stroke="#749f83" stroke-width="1.3"/><circle cx="1293.76" cy="774.20" r="2.2" fill="#fff" stroke="#749f83" stroke-width="1.3"/><circle cx="1420.04" cy="758.23" r="2.2" fill="#fff" stroke="#749f83" stroke-width="1.3"/><circle cx="1546.32" cy="747.93" r="2.2" fill="#fff" stroke="#749f83" stroke-width="1.3"/><circle cx="1672.60" cy="731.97" r="2.2" fill="#fff" stroke="#749f83" stroke-width="1.3"/><circle cx="1798.88" cy="593.43" r="2.2" fill="#fff" stroke="#749f83" stroke-width="1.3"/><text x="1107" y="570" font-size="13" fill="#333" font-family="Liberation Sans, sans-serif">土壤湿度 ( % )</text><text x="1894" y="851" font-size="13" fill="#333" font-family="Liberation Sans, sans-serif">时间</text><text x="1167.5" y="867" text-anchor="middle" font-size="14" fill="#444" font-family="Liberation Sans, sans-serif">18-6-25 17:55</text><text x="1293.8" y="867" text-anchor="middle" font-size="14" fill="#444" font-family="Liberation Sans, sans-serif">18-6-25 23:24</text><text x="1420.0" y="867" text-anchor="middle" font-size="14" fill="#444" font-family="Liberation Sans, sans-serif">18-6-26 03:31</text><text x="1546.3" y="867" text-anchor="middle" font-size="14" fill="#444" font-family="Liberation Sans, sans-serif">18-6-26 06:48</text><text x="1672.6" y="867" text-anchor="middle" font-size="14" fill="#444" font-family="Liberation Sans, sans-serif">18-6-26 12:07</text><text x="1798.9" y="867" text-anchor="middle" font-size="14" fill="#444" font-family="Liberation Sans, sans-serif">18-6-26 15:47</text></svg><div class="abs" style="left:750px;top:653px;width:213px;height:102px;background:rgba(50,50,50,0.7)"></div><div style="position:absolute;left:750px;width:213px;text-align:center;font-size:16px;line-height:22px;color:#fff;white-space:nowrap;top:660px">18-6-26 05:43</div><div style="position:absolute;left:750px;width:213px;text-align:center;font-size:16px;line-height:22px;color:#fff;white-space:nowrap;top:683px"><span style="display:inline-block;width:10px;height:10px;margin-right:6px;vertical-align:-1px;background:#c23531"></span>10cm土壤温度 ( °C ) : -20</div><div style="position:absolute;left:750px;width:213px;text-align:center;font-size:16px;line-height:22px;color:#fff;white-space:nowrap;top:706px"><span style="display:inline-block;width:10px;height:10px;margin-right:6px;vertical-align:-1px;background:#2f4554"></span>20cm土壤温度 ( °C ) : 25.6</div><div style="position:absolute;left:750px;width:213px;text-align:center;font-size:16px;line-height:22px;color:#fff;white-space:nowrap;top:728px"><span style="display:inline-block;width:10px;height:10px;margin-right:6px;vertical-align:-1px;background:#61a0a8"></span>40cm土壤温度 ( °C ) : 22.5</div><div class="abs" style="left:254px;top:73px;width:1px;height:133px;background:#9a9fa6"></div><div class="abs" style="left:254px;top:206px;width:1px;height:10px;background:#8dd6cb"></div><div class="abs" style="left:254px;top:241px;width:1px;height:7px;background:#8dd6cb"></div><div class="abs" style="left:254px;top:248px;width:1px;height:115px;background:#9a9fa6"></div><div class="abs" style="left:254px;top:363px;width:1px;height:34px;background:#9ea3ab"></div><div class="abs" style="left:254px;top:397px;width:1px;height:37px;background:#989ca3"></div><div class="abs" style="left:254px;top:434px;width:1px;height:33px;background:#9ea3ab"></div><div class="abs" style="left:254px;top:467px;width:1px;height:500px;background:#9a9fa6"></div><div class="abs" style="left:255px;top:72px;width:1745px;height:1px;background:#959aa1"></div><div class="abs" style="left:1px;top:72px;width:254px;height:1px;background:#303945"></div>
<div class="bk" style="left:0;top:0;width:2001px;height:1px"></div><div class="bk" style="left:0;top:0;width:1px;height:972px"></div><div class="bk" style="left:2000px;top:0;width:1px;height:972px"></div><div class="bk" style="left:0;top:971px;width:2001px;height:1px"></div><div class="abs" style="left:1px;top:967px;width:254px;height:1px;background:#252e3b"></div>
</body></html>
